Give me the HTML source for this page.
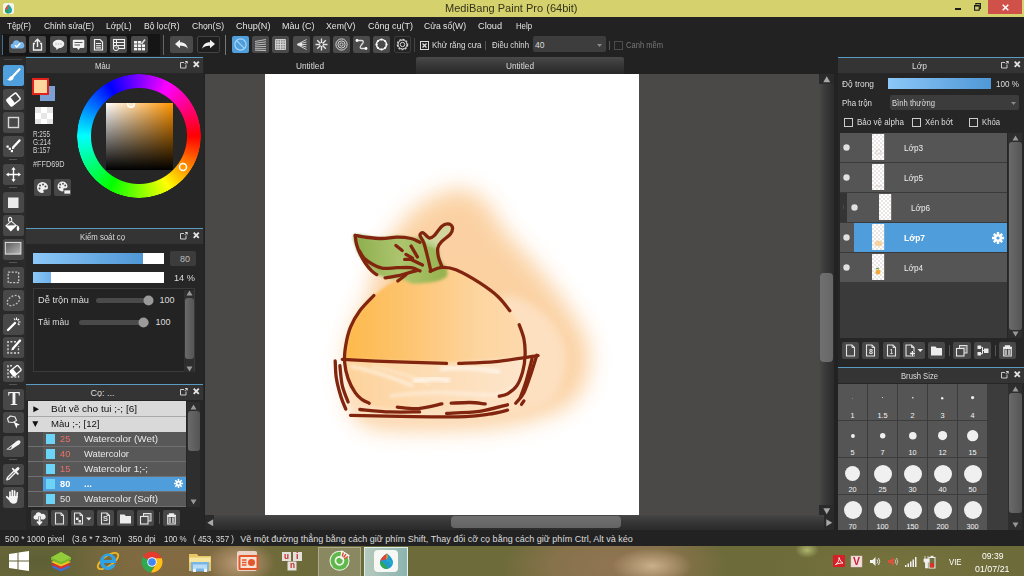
<!DOCTYPE html>
<html><head><meta charset="utf-8"><title>MediBang Paint Pro</title>
<style>
*{box-sizing:border-box;margin:0;padding:0}
html,body{width:1024px;height:576px;overflow:hidden;background:#222;font-family:"Liberation Sans","DejaVu Sans",sans-serif;font-size:10px;color:#ddd}
.t{position:absolute;white-space:nowrap;transform-origin:0 50%;line-height:1}
svg{overflow:visible}
</style></head>
<body>
<div style="position:absolute;left:0px;top:0px;width:1024px;height:17px;background:#d5d26d;"></div><span class="t" style="left:445.30px;top:3.35px;font-size:11.3px;color:#34331c;transform:scaleX(0.9768);">MediBang Paint Pro (64bit)</span><svg style="position:absolute;left:3px;top:3px;" width="11" height="11" viewBox="0 0 11 11"><rect x="0" y="0" width="11" height="11" rx="2.5" fill="#f4f4ee"/><path d="M5.5 1.5 C8 3.5 9 5.5 9 7 A3.5 3.5 0 0 1 2 7 C2 5.5 3 3.5 5.5 1.5Z" fill="#22a6a0"/><path d="M5.5 1.5 C4 3 2.6 4.6 2.2 6.2 L5 6.5 Z" fill="#e8493a"/><path d="M2 7 A3.5 3.5 0 0 0 5.5 10.5 L5.5 6.5Z" fill="#2a9c5c"/></svg><div style="position:absolute;left:955px;top:7.8px;width:6.2px;height:2px;background:#1c1c1c;"></div><svg style="position:absolute;left:974px;top:3px;" width="7" height="8" viewBox="0 0 7 8"><path d="M1.800 1.800V0.600H6.400V5.500H5.200" fill="none" stroke="#1c1c1c" stroke-width="1.100"/><rect x="0.600" y="2.600" width="4.600" height="4.600" fill="none" stroke="#1c1c1c" stroke-width="1.100"/><path d="M0.500 2.800H5.300" stroke="#1c1c1c" stroke-width="1.300"/></svg><div style="position:absolute;left:988px;top:0px;width:34px;height:13.5px;background:#d0504a;"></div><svg style="position:absolute;left:1001.5px;top:3.7px;" width="7" height="7" viewBox="0 0 7 7"><path d="M0.700 0.700L6.300 6.300M6.300 0.700L0.700 6.300" stroke="#fff" stroke-width="1.500"/></svg><div style="position:absolute;left:0px;top:17px;width:1024px;height:16px;background:#222;"></div><span class="t" style="left:7.00px;top:20.80px;font-size:9.6px;color:#e4e4e4;transform:scaleX(0.8339);">Tệp(F)</span><span class="t" style="left:43.50px;top:20.80px;font-size:9.6px;color:#e4e4e4;transform:scaleX(0.8760);">Chỉnh sửa(E)</span><span class="t" style="left:105.50px;top:20.80px;font-size:9.6px;color:#e4e4e4;transform:scaleX(0.8884);">Lớp(L)</span><span class="t" style="left:143.50px;top:20.80px;font-size:9.6px;color:#e4e4e4;transform:scaleX(0.8878);">Bộ lọc(R)</span><span class="t" style="left:191.50px;top:20.80px;font-size:9.6px;color:#e4e4e4;transform:scaleX(0.8955);">Chọn(S)</span><span class="t" style="left:235.50px;top:20.80px;font-size:9.6px;color:#e4e4e4;transform:scaleX(0.9513);">Chụp(N)</span><span class="t" style="left:281.50px;top:20.80px;font-size:9.6px;color:#e4e4e4;transform:scaleX(0.9378);">Màu (C)</span><span class="t" style="left:326.00px;top:20.80px;font-size:9.6px;color:#e4e4e4;transform:scaleX(0.9073);">Xem(V)</span><span class="t" style="left:367.50px;top:20.80px;font-size:9.6px;color:#e4e4e4;transform:scaleX(0.9378);">Công cụ(T)</span><span class="t" style="left:424.00px;top:20.80px;font-size:9.6px;color:#e4e4e4;transform:scaleX(0.8948);">Cửa sổ(W)</span><span class="t" style="left:477.50px;top:20.80px;font-size:9.6px;color:#e4e4e4;transform:scaleX(0.9570);">Cloud</span><span class="t" style="left:516.00px;top:20.80px;font-size:9.6px;color:#e4e4e4;transform:scaleX(0.8108);">Help</span><div style="position:absolute;left:0px;top:33px;width:1024px;height:24px;background:#222;"></div><div style="position:absolute;left:2px;top:34px;width:158px;height:22px;background:#151515;"></div><div style="position:absolute;left:2px;top:35px;width:1px;height:20px;background:#3d6f93;"></div><div style="position:absolute;left:163px;top:35px;width:1px;height:20px;background:#666;"></div><div style="position:absolute;left:225px;top:35px;width:1px;height:20px;background:#777;"></div><div style="position:absolute;left:9.0px;top:36px;width:17px;height:17px;background:#4a4a4a;border-radius:2px;"></div><div style="position:absolute;left:29.25px;top:36px;width:17px;height:17px;background:#4a4a4a;border-radius:2px;"></div><div style="position:absolute;left:49.5px;top:36px;width:17px;height:17px;background:#4a4a4a;border-radius:2px;"></div><div style="position:absolute;left:69.75px;top:36px;width:17px;height:17px;background:#4a4a4a;border-radius:2px;"></div><div style="position:absolute;left:90.0px;top:36px;width:17px;height:17px;background:#4a4a4a;border-radius:2px;"></div><div style="position:absolute;left:110.25px;top:36px;width:17px;height:17px;background:#4a4a4a;border-radius:2px;"></div><div style="position:absolute;left:130.5px;top:36px;width:17px;height:17px;background:#4a4a4a;border-radius:2px;"></div><div style="position:absolute;left:170px;top:36px;width:23px;height:17px;background:#4a4a4a;border-radius:2px;"></div><div style="position:absolute;left:196.5px;top:36px;width:23.5px;height:17px;background:#1e1e1e;border-radius:2px;border:1px solid #444;"></div><div style="position:absolute;left:232px;top:36px;width:17px;height:17px;background:#4f9fdc;border-radius:2px;"></div><div style="position:absolute;left:252.2px;top:36px;width:17px;height:17px;background:#4a4a4a;border-radius:2px;"></div><div style="position:absolute;left:272.4px;top:36px;width:17px;height:17px;background:#4a4a4a;border-radius:2px;"></div><div style="position:absolute;left:292.6px;top:36px;width:17px;height:17px;background:#4a4a4a;border-radius:2px;"></div><div style="position:absolute;left:312.8px;top:36px;width:17px;height:17px;background:#4a4a4a;border-radius:2px;"></div><div style="position:absolute;left:333.0px;top:36px;width:17px;height:17px;background:#4a4a4a;border-radius:2px;"></div><div style="position:absolute;left:353.2px;top:36px;width:17px;height:17px;background:#4a4a4a;border-radius:2px;"></div><div style="position:absolute;left:373.4px;top:36px;width:17px;height:17px;background:#4a4a4a;border-radius:2px;"></div><div style="position:absolute;left:393.6px;top:36px;width:17px;height:17px;background:#242424;border-radius:2px;border:1px solid #3c3c3c;"></div><div style="position:absolute;left:414px;top:38px;width:1px;height:14px;background:#444;"></div><svg style="position:absolute;left:420px;top:40.5px;" width="9" height="9" viewBox="0 0 9 9"><rect x="0.5" y="0.5" width="8" height="8" fill="none" stroke="#ddd" stroke-width="1"/><path d="M2.5 2.5L6.5 6.5M6.5 2.5L2.5 6.5" stroke="#ddd" stroke-width="1.4"/></svg><span class="t" style="left:431.80px;top:40.70px;font-size:9px;color:#ddd;transform:scaleX(0.8906);">Khử răng cưa</span><div style="position:absolute;left:485px;top:40.5px;width:1px;height:9px;background:#555;"></div><span class="t" style="left:492.00px;top:40.70px;font-size:9px;color:#ddd;transform:scaleX(0.8699);">Điều chỉnh</span><div style="position:absolute;left:532.5px;top:36px;width:73px;height:16px;background:#3d3d3d;border-radius:2px;"></div><span class="t" style="left:535.00px;top:40.95px;font-size:8.5px;color:#ddd;">40</span><svg style="position:absolute;left:596.5px;top:43.5px;" width="5" height="3.5" viewBox="0 0 5 3.5"><path d="M0 0H5L2.5 3Z" fill="#8a8a8a"/></svg><div style="position:absolute;left:608.5px;top:40.5px;width:1px;height:9px;background:#555;"></div><svg style="position:absolute;left:613.5px;top:40.5px;" width="9" height="9" viewBox="0 0 9 9"><rect x="0.5" y="0.5" width="8" height="8" fill="none" stroke="#4a4a4a" stroke-width="1"/></svg><span class="t" style="left:626.40px;top:40.70px;font-size:9px;color:#777;transform:scaleX(0.8406);">Canh mềm</span><div style="position:absolute;left:0px;top:57px;width:26px;height:473px;background:#2a2a2a;"></div><div style="position:absolute;left:4px;top:59px;width:18px;height:1px;background:#444;"></div><div style="position:absolute;left:3px;top:65px;width:21px;height:21px;background:#4fa0dc;border-radius:2.5px;"></div><div style="position:absolute;left:3px;top:88.5px;width:21px;height:21px;background:#484848;border-radius:2.5px;"></div><div style="position:absolute;left:3px;top:112px;width:21px;height:21px;background:#484848;border-radius:2.5px;"></div><div style="position:absolute;left:3px;top:135.5px;width:21px;height:21px;background:#484848;border-radius:2.5px;"></div><div style="position:absolute;left:3px;top:163.5px;width:21px;height:21px;background:#484848;border-radius:2.5px;"></div><div style="position:absolute;left:3px;top:191.5px;width:21px;height:21px;background:#484848;border-radius:2.5px;"></div><div style="position:absolute;left:3px;top:215px;width:21px;height:21px;background:#484848;border-radius:2.5px;"></div><div style="position:absolute;left:3px;top:238.5px;width:21px;height:21px;background:#484848;border-radius:2.5px;"></div><div style="position:absolute;left:3px;top:266.5px;width:21px;height:21px;background:#484848;border-radius:2.5px;"></div><div style="position:absolute;left:3px;top:290px;width:21px;height:21px;background:#484848;border-radius:2.5px;"></div><div style="position:absolute;left:3px;top:313.5px;width:21px;height:21px;background:#484848;border-radius:2.5px;"></div><div style="position:absolute;left:3px;top:337px;width:21px;height:21px;background:#484848;border-radius:2.5px;"></div><div style="position:absolute;left:3px;top:360.5px;width:21px;height:21px;background:#484848;border-radius:2.5px;"></div><div style="position:absolute;left:3px;top:388.5px;width:21px;height:21px;background:#484848;border-radius:2.5px;"></div><div style="position:absolute;left:3px;top:412px;width:21px;height:21px;background:#484848;border-radius:2.5px;"></div><div style="position:absolute;left:3px;top:435.5px;width:21px;height:21px;background:#484848;border-radius:2.5px;"></div><div style="position:absolute;left:3px;top:463.5px;width:21px;height:21px;background:#484848;border-radius:2.5px;"></div><div style="position:absolute;left:3px;top:487px;width:21px;height:21px;background:#484848;border-radius:2.5px;"></div><div style="position:absolute;left:9px;top:159px;width:8px;height:1px;background:#555;"></div><div style="position:absolute;left:9px;top:187px;width:8px;height:1px;background:#555;"></div><div style="position:absolute;left:9px;top:262px;width:8px;height:1px;background:#555;"></div><div style="position:absolute;left:9px;top:384px;width:8px;height:1px;background:#555;"></div><div style="position:absolute;left:9px;top:459px;width:8px;height:1px;background:#555;"></div><div style="position:absolute;left:26px;top:57px;width:179px;height:172px;background:#262626;"></div><div style="position:absolute;left:26px;top:57px;width:177px;height:16px;background:#343434;border-top:1px solid #5a9bc4;"></div><span class="t" style="left:95.00px;top:61.70px;font-size:9px;color:#ddd;transform:scaleX(0.8564);">Màu</span><svg style="position:absolute;left:179.7px;top:61.2px;" width="8" height="7.5" viewBox="0 0 8 7.5"><path d="M4 1.5H0.5V7H6V3.5" fill="none" stroke="#ccc" stroke-width="1"/><path d="M5.2 0.5H7.2V2.5M7.200 0.5L4.800 2.900" fill="none" stroke="#ddd" stroke-width="1"/></svg><svg style="position:absolute;left:192.5px;top:61.4px;" width="6.5" height="6.5" viewBox="0 0 6.5 6.5"><path d="M0.700 0.700L5.800 5.800M5.800 0.700L0.700 5.800" stroke="#e4e4e4" stroke-width="1.900"/></svg><div style="position:absolute;left:40px;top:86px;width:15px;height:15px;background:#7c9fd4;"></div><div style="position:absolute;left:32px;top:78px;width:16.5px;height:16.5px;background:#ffd69d;border:2px solid #e2221b;"></div><svg style="position:absolute;left:35px;top:107px;" width="18" height="17" viewBox="0 0 18 17"><rect width="18" height="17" fill="#fff"/><rect x="0" y="0" width="6" height="6" fill="#e6e6e6"/><rect x="12" y="0" width="6" height="6" fill="#e6e6e6"/><rect x="6" y="6" width="6" height="6" fill="#e6e6e6"/><rect x="0" y="12" width="6" height="5" fill="#e6e6e6"/><rect x="12" y="12" width="6" height="5" fill="#e6e6e6"/></svg><span class="t" style="left:32.90px;top:129.55px;font-size:8.5px;color:#d0d0d0;transform:scaleX(0.7493);">R:255</span><span class="t" style="left:32.90px;top:138.15px;font-size:8.5px;color:#d0d0d0;transform:scaleX(0.7730);">G:214</span><span class="t" style="left:32.90px;top:146.25px;font-size:8.5px;color:#d0d0d0;transform:scaleX(0.7651);">B:157</span><span class="t" style="left:32.90px;top:159.95px;font-size:8.5px;color:#d0d0d0;transform:scaleX(0.8577);">#FFD69D</span><div style="position:absolute;left:34.1px;top:179.2px;width:16.7px;height:16.7px;background:#484848;border-radius:2px;"></div><div style="position:absolute;left:54.4px;top:179.2px;width:16.5px;height:16.7px;background:#484848;border-radius:2px;"></div><div style="position:absolute;left:77px;top:74px;width:124px;height:124px;border-radius:50%;background:conic-gradient(from 90deg,#f00,#ff0,#0f0,#0ff,#00f,#f0f,#f00);-webkit-mask:radial-gradient(circle,transparent 47.5px,#000 48.5px,#000 61.5px,transparent 62.5px);mask:radial-gradient(circle,transparent 47.5px,#000 48.5px,#000 61.5px,transparent 62.5px)"></div><div style="position:absolute;left:105.5px;top:102.5px;width:67px;height:67px;background:linear-gradient(to bottom,rgba(0,0,0,0),#000),linear-gradient(to right,#fff,#ff9400)"></div><svg style="position:absolute;left:126px;top:102.5px;overflow:hidden" width="10" height="6" viewBox="0 4 10 6"><circle cx="5" cy="5" r="3.4" fill="#ffe6c4" stroke="#fff" stroke-width="1.4"/></svg><svg style="position:absolute;left:178px;top:161.6px;" width="10" height="10" viewBox="0 0 10 10"><circle cx="5" cy="5" r="3.5" fill="#ff9400" stroke="#fff" stroke-width="1.5"/></svg><div style="position:absolute;left:26px;top:228px;width:179px;height:156px;background:#262626;"></div><div style="position:absolute;left:26px;top:228px;width:177px;height:16px;background:#343434;border-top:1px solid #5a9bc4;"></div><span class="t" style="left:80.00px;top:232.70px;font-size:9px;color:#ddd;transform:scaleX(0.8649);">Kiểm soát cọ</span><svg style="position:absolute;left:179.7px;top:232.2px;" width="8" height="7.5" viewBox="0 0 8 7.5"><path d="M4 1.5H0.5V7H6V3.5" fill="none" stroke="#ccc" stroke-width="1"/><path d="M5.2 0.5H7.2V2.5M7.200 0.5L4.800 2.900" fill="none" stroke="#ddd" stroke-width="1"/></svg><svg style="position:absolute;left:192.5px;top:232.4px;" width="6.5" height="6.5" viewBox="0 0 6.5 6.5"><path d="M0.700 0.700L5.800 5.800M5.800 0.700L0.700 5.800" stroke="#e4e4e4" stroke-width="1.900"/></svg><div style="position:absolute;left:33px;top:253px;width:131px;height:11px;background:#fff;"></div><div style="position:absolute;left:33px;top:253px;width:109.5px;height:11px;background:linear-gradient(to right,#8cc8f8,#4f97d6);"></div><div style="position:absolute;left:169.5px;top:251px;width:26px;height:15px;background:#3c3c3c;border-radius:2px;"></div><span class="t" style="left:179.98px;top:254.50px;font-size:9px;color:#bbb;">80</span><div style="position:absolute;left:33px;top:272px;width:131px;height:11px;background:#fff;"></div><div style="position:absolute;left:33px;top:272px;width:17.5px;height:11px;background:linear-gradient(to right,#8cc8f8,#6fb2ea);"></div><span class="t" style="left:174.00px;top:273.50px;font-size:9px;color:#ddd;transform:scaleX(1.0236);">14 %</span><div style="position:absolute;left:33px;top:288.3px;width:162px;height:84px;background:#232323;border:1px solid #3a3a3a;"></div><span class="t" style="left:38.00px;top:295.50px;font-size:9px;color:#ddd;transform:scaleX(1.0297);">Dễ trộn màu</span><div style="position:absolute;left:95.5px;top:297.5px;width:57px;height:5px;background:#4a4a4a;border-radius:2.5px;"></div><svg style="position:absolute;left:142.5px;top:294.5px;" width="11" height="11" viewBox="0 0 11 11"><circle cx="5.5" cy="5.5" r="5" fill="#9a9a9a"/></svg><span class="t" style="left:159.50px;top:295.50px;font-size:9px;color:#ddd;">100</span><span class="t" style="left:38.00px;top:318.00px;font-size:9px;color:#ddd;transform:scaleX(0.9534);">Tải màu</span><div style="position:absolute;left:79px;top:320px;width:70px;height:5px;background:#4a4a4a;border-radius:2.5px;"></div><svg style="position:absolute;left:138px;top:317px;" width="11" height="11" viewBox="0 0 11 11"><circle cx="5.5" cy="5.5" r="5" fill="#9a9a9a"/></svg><span class="t" style="left:155.50px;top:318.00px;font-size:9px;color:#ddd;">100</span><div style="position:absolute;left:184px;top:289.5px;width:10px;height:82px;background:#2e2e2e;"></div><svg style="position:absolute;left:185.5px;top:290px;" width="7" height="6" viewBox="0 0 7 6"><path d="M3.5 0.5L6.5 5.5H0.5Z" fill="#999"/></svg><div style="position:absolute;left:184.5px;top:298px;width:9px;height:61px;background:linear-gradient(to right,#6a6a6a,#555);border-radius:3px;"></div><svg style="position:absolute;left:185.5px;top:365.5px;" width="7" height="6" viewBox="0 0 7 6"><path d="M3.5 5.5L6.5 0.5H0.5Z" fill="#999"/></svg><div style="position:absolute;left:26px;top:384px;width:179px;height:146px;background:#262626;"></div><div style="position:absolute;left:26px;top:384px;width:177px;height:16px;background:#343434;border-top:1px solid #5a9bc4;"></div><span class="t" style="left:90.50px;top:388.70px;font-size:9px;color:#ddd;">Cọ: ...</span><svg style="position:absolute;left:179.7px;top:388.2px;" width="8" height="7.5" viewBox="0 0 8 7.5"><path d="M4 1.5H0.5V7H6V3.5" fill="none" stroke="#ccc" stroke-width="1"/><path d="M5.2 0.5H7.2V2.5M7.200 0.5L4.800 2.900" fill="none" stroke="#ddd" stroke-width="1"/></svg><svg style="position:absolute;left:192.5px;top:388.4px;" width="6.5" height="6.5" viewBox="0 0 6.5 6.5"><path d="M0.700 0.700L5.800 5.800M5.800 0.700L0.700 5.800" stroke="#e4e4e4" stroke-width="1.900"/></svg><div style="position:absolute;left:28px;top:401px;width:158px;height:30.5px;background:#d9d9d9;"></div><div style="position:absolute;left:28px;top:416px;width:158px;height:1px;background:#a8a8a8;"></div><svg style="position:absolute;left:32.5px;top:405.5px;" width="6.5" height="7" viewBox="0 0 6.5 7"><path d="M0.3 0.3L6 3.3L0.3 6.3Z" fill="#111"/></svg><svg style="position:absolute;left:32.3px;top:421.3px;" width="7" height="6.5" viewBox="0 0 7 6.5"><path d="M0.3 0.3H6.3L3.3 6Z" fill="#111"/></svg><span class="t" style="left:50.70px;top:404.25px;font-size:9.5px;color:#111;transform:scaleX(1.0506);">Bút vẽ cho tui ;-; [6]</span><span class="t" style="left:50.70px;top:419.45px;font-size:9.5px;color:#111;transform:scaleX(1.0091);">Màu ;-; [12]</span><div style="position:absolute;left:28px;top:431.5px;width:158px;height:75px;background:#707070;"></div><div style="position:absolute;left:28px;top:432px;width:15px;height:14px;background:#4c4c4c;"></div><div style="position:absolute;left:43px;top:432px;width:143px;height:14px;background:#585858;"></div><div style="position:absolute;left:45.8px;top:434px;width:9.2px;height:9.5px;background:#6cd4f7;"></div><span class="t" style="left:59.50px;top:434.05px;font-size:9.5px;color:#ea7068;transform:scaleX(0.9737);">25</span><span class="t" style="left:83.50px;top:434.05px;font-size:9.5px;color:#e8e8e8;transform:scaleX(1.0384);">Watercolor (Wet)</span><div style="position:absolute;left:28px;top:447px;width:15px;height:14px;background:#4c4c4c;"></div><div style="position:absolute;left:43px;top:447px;width:143px;height:14px;background:#585858;"></div><div style="position:absolute;left:45.8px;top:449px;width:9.2px;height:9.5px;background:#6cd4f7;"></div><span class="t" style="left:59.50px;top:449.05px;font-size:9.5px;color:#ea7068;transform:scaleX(0.9737);">40</span><span class="t" style="left:83.50px;top:449.05px;font-size:9.5px;color:#e8e8e8;transform:scaleX(0.9873);">Watercolor</span><div style="position:absolute;left:28px;top:462px;width:15px;height:14px;background:#4c4c4c;"></div><div style="position:absolute;left:43px;top:462px;width:143px;height:14px;background:#585858;"></div><div style="position:absolute;left:45.8px;top:464px;width:9.2px;height:9.5px;background:#6cd4f7;"></div><span class="t" style="left:59.50px;top:464.05px;font-size:9.5px;color:#ea7068;transform:scaleX(0.9737);">15</span><span class="t" style="left:83.50px;top:464.05px;font-size:9.5px;color:#e8e8e8;transform:scaleX(1.0330);">Watercolor 1;-;</span><div style="position:absolute;left:28px;top:477px;width:15px;height:14px;background:#4c4c4c;"></div><div style="position:absolute;left:43px;top:477px;width:143px;height:14px;background:#4f9ddb;"></div><div style="position:absolute;left:45.8px;top:479px;width:9.2px;height:9.5px;background:#6cd4f7;"></div><span class="t" style="left:59.50px;top:479.05px;font-size:9.5px;color:#fff;font-weight:bold;transform:scaleX(0.9737);">80</span><span class="t" style="left:83.50px;top:479.05px;font-size:9.5px;color:#fff;font-weight:bold;transform:scaleX(1.0099);">...</span><div style="position:absolute;left:28px;top:492px;width:15px;height:14px;background:#4c4c4c;"></div><div style="position:absolute;left:43px;top:492px;width:143px;height:14px;background:#585858;"></div><div style="position:absolute;left:45.8px;top:494px;width:9.2px;height:9.5px;background:#6cd4f7;"></div><span class="t" style="left:59.50px;top:494.05px;font-size:9.5px;color:#e4e4e4;transform:scaleX(0.9737);">50</span><span class="t" style="left:83.50px;top:494.05px;font-size:9.5px;color:#e8e8e8;transform:scaleX(1.0356);">Watercolor (Soft)</span><div style="position:absolute;left:28px;top:506.5px;width:158px;height:1.5px;background:#262626;"></div><svg style="position:absolute;left:173.5px;top:479px;" width="9" height="9" viewBox="0 0 9 9"><circle cx="4.5" cy="4.5" r="2.6" fill="#fff"/><g stroke="#fff" stroke-width="1.6"><path d="M4.5 0V9M0 4.5H9M1.3 1.3L7.7 7.7M7.7 1.3L1.3 7.7"/></g><circle cx="4.5" cy="4.5" r="1" fill="#4f9ddb"/></svg><div style="position:absolute;left:187px;top:402px;width:13px;height:105px;background:#2e2e2e;"></div><svg style="position:absolute;left:190px;top:404px;" width="7" height="6" viewBox="0 0 7 6"><path d="M3.5 0.5L6.5 5.5H0.5Z" fill="#999"/></svg><div style="position:absolute;left:187.5px;top:411px;width:12px;height:40px;background:linear-gradient(to right,#6a6a6a,#555);border-radius:3px;"></div><svg style="position:absolute;left:190px;top:499px;" width="7" height="6" viewBox="0 0 7 6"><path d="M3.5 5.5L6.5 0.5H0.5Z" fill="#999"/></svg><div style="position:absolute;left:31.3px;top:509.5px;width:16.7px;height:16.7px;background:#484848;border-radius:2px;"></div><div style="position:absolute;left:51.1px;top:509.5px;width:16.7px;height:16.7px;background:#484848;border-radius:2px;"></div><div style="position:absolute;left:71.4px;top:509.5px;width:22.3px;height:16.7px;background:#484848;border-radius:2px;"></div><div style="position:absolute;left:97.2px;top:509.5px;width:16.7px;height:16.7px;background:#484848;border-radius:2px;"></div><div style="position:absolute;left:117px;top:509.5px;width:16.7px;height:16.7px;background:#484848;border-radius:2px;"></div><div style="position:absolute;left:137.1px;top:509.5px;width:16.9px;height:16.7px;background:#484848;border-radius:2px;"></div><div style="position:absolute;left:163.1px;top:509.5px;width:16.7px;height:16.7px;background:#484848;border-radius:2px;"></div><div style="position:absolute;left:159px;top:512px;width:1px;height:12px;background:#555;"></div><div style="position:absolute;left:204px;top:57px;width:634px;height:473px;background:#222;"></div><div style="position:absolute;left:205px;top:57px;width:211px;height:17px;background:#222;"></div><div style="position:absolute;left:415.5px;top:56.5px;width:208.5px;height:17.5px;background:linear-gradient(to bottom,#4a4a4a,#3a3a3a 40%,#282828);border-radius:2px 2px 0 0;"></div><span class="t" style="left:296.00px;top:62.05px;font-size:8.5px;color:#ddd;transform:scaleX(0.9713);">Untitled</span><span class="t" style="left:505.50px;top:62.05px;font-size:8.5px;color:#ddd;transform:scaleX(0.9713);">Untitled</span><div style="position:absolute;left:205.4px;top:74px;width:614.6px;height:441px;background:#4a4948;"></div><div style="position:absolute;left:264.8px;top:74px;width:374.7px;height:441px;background:#fff;"></div><div style="position:absolute;left:819px;top:74px;width:14.5px;height:441px;background:linear-gradient(to right,#4a4948,#3a3a3a 40%,#2b2b2b);"></div><div style="position:absolute;left:819px;top:74px;width:14.5px;height:10px;background:#2a2a2a;"></div><div style="position:absolute;left:819px;top:505px;width:14.5px;height:10px;background:#2a2a2a;"></div><div style="position:absolute;left:819.5px;top:273px;width:13.5px;height:89px;background:linear-gradient(to right,#707070,#666);border-radius:4px;"></div><svg style="position:absolute;left:822.5px;top:75.5px;" width="7.5" height="6.5" viewBox="0 0 7.5 6.5"><path d="M3.75 0.3L7.2 6.200H0.3Z" fill="#a8a8a8"/></svg><svg style="position:absolute;left:822.5px;top:507.5px;" width="7.5" height="6.5" viewBox="0 0 7.5 6.5"><path d="M3.75 6.200L7.2 0.3H0.3Z" fill="#a8a8a8"/></svg><div style="position:absolute;left:205.4px;top:515px;width:628px;height:15px;background:linear-gradient(to bottom,#474646,#3a3a3a 35%,#2a2a2a);"></div><div style="position:absolute;left:205.4px;top:515px;width:9px;height:15px;background:#2a2a2a;"></div><div style="position:absolute;left:824px;top:515px;width:9.5px;height:15px;background:#2a2a2a;"></div><div style="position:absolute;left:451px;top:515.5px;width:169.5px;height:12.5px;background:linear-gradient(to bottom,#707070,#646464);border-radius:4px;"></div><svg style="position:absolute;left:206.5px;top:518.8px;" width="6.5" height="7.5" viewBox="0 0 6.5 7.5"><path d="M0.3 3.750L6.200 0.3V7.200Z" fill="#a8a8a8"/></svg><svg style="position:absolute;left:825.5px;top:518.8px;" width="6.5" height="7.5" viewBox="0 0 6.5 7.5"><path d="M6.200 3.750L0.3 0.3V7.200Z" fill="#a8a8a8"/></svg><svg style="position:absolute;left:0;top:0" width="1024" height="576" viewBox="0 0 1024 576"><defs>
<filter id="b10" x="-30%" y="-30%" width="160%" height="160%"><feGaussianBlur stdDeviation="11"/></filter>
<filter id="b4" x="-30%" y="-30%" width="160%" height="160%"><feGaussianBlur stdDeviation="4"/></filter>
<filter id="b2" x="-30%" y="-30%" width="160%" height="160%"><feGaussianBlur stdDeviation="1.6"/></filter>
<linearGradient id="fg" x1="0" y1="0" x2="1" y2="0"><stop offset="0" stop-color="#fdb94a"/><stop offset=".35" stop-color="#fdc470"/><stop offset=".75" stop-color="#fdd5a0"/><stop offset="1" stop-color="#fdd9ac"/></linearGradient>
<linearGradient id="lg" x1="0" y1="0" x2="1" y2="0"><stop offset="0" stop-color="#86a842"/><stop offset=".5" stop-color="#a9c56c"/><stop offset="1" stop-color="#8fb04b"/></linearGradient>
<linearGradient id="bg2" x1="0" y1="0" x2="1" y2="0"><stop offset="0" stop-color="#fdd29a"/><stop offset=".45" stop-color="#fddcb4"/><stop offset="1" stop-color="#fde5cb"/></linearGradient>
<clipPath id="cv"><rect x="264" y="74" width="375.5" height="441"/></clipPath>
</defs>
<g clip-path="url(#cv)">
<path d="M380.0 256.0C385.0 244.3 391.3 236.5 398.0 228.0C404.7 219.5 412.2 211.0 420.0 205.0C427.8 199.0 437.3 194.5 445.0 192.0C452.7 189.5 459.0 188.2 466.0 190.0C473.0 191.8 480.3 196.0 487.0 203.0C493.7 210.0 497.5 221.2 506.0 232.0C514.5 242.8 527.2 254.7 538.0 268.0C548.8 281.3 562.7 299.2 571.0 312.0C579.3 324.8 585.5 333.7 588.0 345.0C590.5 356.3 589.0 370.2 586.0 380.0C583.0 389.8 578.0 397.7 570.0 404.0C562.0 410.3 552.0 414.0 538.0 418.0C524.0 422.0 508.5 426.0 486.0 428.0C463.5 430.0 423.2 430.5 403.0 430.0C382.8 429.5 373.5 428.7 365.0 425.0C356.5 421.3 355.0 415.5 352.0 408.0C349.0 400.5 347.7 389.7 347.0 380.0C346.3 370.3 346.5 359.7 348.0 350.0C349.5 340.3 352.7 330.7 356.0 322.0C359.3 313.3 364.0 309.0 368.0 298.0C372.0 287.0 375.0 267.7 380.0 256.0Z" fill="#fbd0a0" filter="url(#b10)" opacity=".97"/>
<path d="M500.0 300.0C506.7 288.3 529.2 302.5 540.0 310.0C550.8 317.5 561.3 332.5 565.0 345.0C568.7 357.5 566.2 374.5 562.0 385.0C557.8 395.5 553.7 402.2 540.0 408.0C526.3 413.8 503.3 417.7 480.0 420.0C456.7 422.3 420.0 422.8 400.0 422.0C380.0 421.2 368.3 419.5 360.0 415.0C351.7 410.5 340.0 399.2 350.0 395.0C360.0 390.8 395.0 392.5 420.0 390.0C445.0 387.5 486.7 395.0 500.0 380.0C513.3 365.0 493.3 311.7 500.0 300.0Z" fill="#fde0c0" filter="url(#b4)"/>
<path d="M344.6 360.0C344.8 357.5 344.8 350.5 345.8 345.0C346.8 339.5 348.2 332.9 350.5 327.2C352.8 321.5 355.9 316.1 359.8 310.8C363.7 305.5 367.2 301.0 373.9 295.5C380.6 290.0 390.6 282.0 400.0 278.0C409.4 274.0 423.2 273.2 430.2 271.4C437.2 269.6 437.6 267.7 441.9 267.4C446.2 267.1 449.6 267.2 455.9 269.8C462.1 272.4 472.4 278.2 479.4 282.7C486.4 287.2 493.0 292.0 498.1 296.7C503.2 301.4 506.3 306.1 509.8 310.8C513.3 315.5 516.9 319.9 519.2 324.8C521.6 329.7 522.9 334.5 523.9 340.0C524.9 345.5 524.9 355.0 525.1 358.0L446 363Z" fill="url(#fg)" filter="url(#b2)"/>
<path d="M525.1 357.0C524.7 359.4 524.1 366.8 522.7 371.6C521.3 376.4 519.4 381.4 516.9 385.6C514.4 389.8 513.6 393.3 507.5 397.0C501.4 400.7 494.6 405.8 480.0 408.0C465.4 410.2 438.5 410.5 420.0 410.0C401.5 409.5 380.0 407.9 369.2 405.0C358.4 402.1 358.7 397.1 355.2 392.7C351.7 388.3 349.9 384.1 348.1 378.6C346.3 373.2 345.2 363.1 344.6 360.0L446 363Z" fill="url(#bg2)" filter="url(#b2)"/>
<path d="M350 366Q380 372 413 386" fill="none" stroke="#fff" stroke-width="4" opacity=".45" filter="url(#b2)"/>
<path d="M372 366Q400 372 430 384" fill="none" stroke="#fff" stroke-width="3" opacity=".3" filter="url(#b2)"/>
<path d="M413 382Q432 376 450 381" fill="none" stroke="#fff" stroke-width="6" opacity=".55" filter="url(#b2)"/>
<path d="M440 369Q470 366 500 372" fill="none" stroke="#fff" stroke-width="5" opacity=".5" filter="url(#b2)"/>
<path d="M390 396Q430 390 470 394T512 386" fill="none" stroke="#fff" stroke-width="4" opacity=".35" filter="url(#b2)"/>
<path d="M355.2 234.6C359.1 233.4 371.6 237.8 378.6 238.0C385.6 238.2 391.5 236.0 397.3 236.0C403.1 236.0 409.8 238.0 413.7 238.0C417.6 238.0 418.8 235.7 421.0 236.0C423.2 236.3 424.8 238.8 427.0 240.0C429.2 241.2 432.2 241.5 434.0 243.0C435.8 244.5 437.0 246.3 438.0 249.0C439.0 251.7 438.7 255.8 440.0 259.0C441.3 262.2 444.8 265.2 446.0 268.0C447.2 270.8 448.3 273.8 447.0 276.0C445.7 278.2 441.8 279.8 438.0 281.0C434.2 282.2 428.3 282.6 424.0 283.0C419.7 283.4 415.3 284.0 412.0 283.5C408.7 283.0 407.3 280.8 404.0 280.0C400.7 279.2 396.3 279.8 392.0 279.0C387.7 278.2 381.8 277.0 378.0 275.0C374.2 273.0 372.0 270.2 369.0 267.0C366.0 263.8 362.2 259.7 360.0 256.0C357.8 252.3 356.3 248.6 355.5 245.0C354.7 241.4 351.3 235.8 355.2 234.6Z" fill="url(#lg)" filter="url(#b2)" opacity=".95"/>
<path d="M421.0 235.0C420.8 233.2 422.3 231.7 424.0 232.0C425.7 232.3 428.0 238.0 431.0 237.0C434.0 236.0 439.1 228.2 442.0 226.0C444.9 223.8 446.8 223.8 448.5 224.0C450.2 224.2 451.9 225.8 452.0 227.5C452.1 229.2 450.8 231.8 449.0 234.0C447.2 236.2 442.8 238.5 441.0 241.0C439.2 243.5 439.5 248.0 438.0 249.0C436.5 250.0 434.2 248.0 432.0 247.0C429.8 246.0 426.8 245.0 425.0 243.0C423.2 241.0 421.2 236.8 421.0 235.0Z" fill="#c3d89c" filter="url(#b2)" opacity=".75"/>
<path d="M355.2 235.3C356.9 235.6 360.9 236.7 365.4 237.2C369.8 237.7 376.6 238.5 381.9 238.5C387.2 238.5 392.2 237.2 397.1 237.2C402.0 237.2 407.3 237.7 411.1 238.5C414.9 239.3 418.5 241.7 420.0 242.3" fill="none" stroke="#82250f" stroke-width="3.3" stroke-linecap="round" stroke-linejoin="round"/>
<path d="M355.2 235.3C355.4 236.8 355.6 241.0 356.5 244.2C357.4 247.4 358.8 251.2 360.3 254.4C361.8 257.6 363.5 260.4 365.4 263.2C367.3 265.9 369.8 269.0 371.7 270.9C373.6 272.8 375.9 274.1 376.8 274.7" fill="none" stroke="#82250f" stroke-width="3.3" stroke-linecap="round" stroke-linejoin="round"/>
<path d="M359.5 251.0C360.3 252.2 361.9 255.9 364.1 258.2C366.4 260.4 369.8 262.8 373.0 264.5C376.2 266.2 379.2 267.8 383.2 268.3C387.2 268.8 392.5 267.8 397.1 267.7C401.8 267.6 407.3 267.2 411.1 267.7C414.9 268.2 418.5 270.4 420.0 270.9" fill="none" stroke="#82250f" stroke-width="3.3" stroke-linecap="round" stroke-linejoin="round"/>
<path d="M385.1 277.8C387.1 277.5 393.2 276.7 397.1 275.9C401.0 275.1 405.4 273.6 408.6 272.8C411.8 272.0 414.9 271.2 416.2 270.9" fill="none" stroke="#82250f" stroke-width="3.3" stroke-linecap="round" stroke-linejoin="round"/>
<path d="M397.8 281.0L406.0 274.7" fill="none" stroke="#82250f" stroke-width="3.3" stroke-linecap="round" stroke-linejoin="round"/>
<path d="M430.8 270.9C430.3 268.6 428.8 261.6 427.6 256.9C426.4 252.2 425.1 246.5 423.8 242.9C422.5 239.3 420.1 237.0 420.0 235.3C419.9 233.6 421.7 232.4 423.2 232.8C424.7 233.2 427.1 237.4 428.9 237.9C430.7 238.4 431.8 237.8 433.9 235.9C436.0 234.0 439.3 228.4 441.6 226.4C443.9 224.4 446.1 223.8 447.9 223.9C449.7 224.0 452.0 225.4 452.4 227.1C452.8 228.8 452.2 231.6 450.4 234.0C448.6 236.4 443.7 239.4 441.6 241.7C439.5 244.0 438.3 245.5 437.8 248.0C437.3 250.5 437.8 253.9 438.4 256.9C439.0 259.9 441.1 264.3 441.6 265.8" fill="none" stroke="#82250f" stroke-width="3.3" stroke-linecap="round" stroke-linejoin="round"/>
<path d="M430.2 271.4C432.1 270.7 437.6 267.7 441.9 267.4C446.2 267.1 449.6 267.2 455.9 269.8C462.1 272.4 472.4 278.2 479.4 282.7C486.4 287.2 493.0 292.0 498.1 296.7C503.2 301.4 507.9 308.4 509.8 310.8" fill="none" stroke="#82250f" stroke-width="3.3" stroke-linecap="round" stroke-linejoin="round"/>
<path d="M519.2 324.8C520.0 327.1 522.9 333.7 523.9 338.8C524.9 343.9 525.3 349.7 525.1 355.2C524.9 360.7 524.1 366.5 522.7 371.6C521.3 376.7 519.4 381.9 516.9 385.6C514.4 389.3 510.4 392.0 507.5 393.8C504.6 395.6 500.7 395.8 499.3 396.2" fill="none" stroke="#82250f" stroke-width="3.3" stroke-linecap="round" stroke-linejoin="round"/>
<path d="M373.9 295.5C371.5 298.1 363.7 305.5 359.8 310.8C355.9 316.1 352.8 321.5 350.5 327.2C348.2 332.9 346.8 339.2 345.8 345.0C344.8 350.8 344.2 356.6 344.6 362.2C345.0 367.8 346.3 373.5 348.1 378.6C349.9 383.7 352.9 389.2 355.2 392.7C357.5 396.2 359.9 397.9 362.2 399.7C364.5 401.4 368.0 402.6 369.2 403.2" fill="none" stroke="#82250f" stroke-width="3.3" stroke-linecap="round" stroke-linejoin="round"/>
<path d="M342.3 359.4C350.3 359.8 372.9 361.0 390.3 361.7C407.7 362.4 437.2 363.1 446.6 363.4" fill="none" stroke="#82250f" stroke-width="3.3" stroke-linecap="round" stroke-linejoin="round"/>
<path d="M458.7 363.4C464.9 363.1 482.6 363.0 495.8 361.7C509.0 360.4 531.0 356.6 538.0 355.6" fill="none" stroke="#82250f" stroke-width="3.3" stroke-linecap="round" stroke-linejoin="round"/>
<path d="M335.2 361.0C335.4 363.9 335.4 372.6 336.4 378.6C337.4 384.7 339.5 392.2 341.1 397.3C342.7 402.4 345.0 407.1 345.8 409.1" fill="none" stroke="#82250f" stroke-width="3.3" stroke-linecap="round" stroke-linejoin="round"/>
<path d="M339.9 365.7C340.3 369.0 340.9 379.6 342.3 385.6C343.7 391.7 347.1 399.3 348.1 402.0" fill="none" stroke="#82250f" stroke-width="3.3" stroke-linecap="round" stroke-linejoin="round"/>
<path d="M536.8 355.2C535.8 358.3 533.0 367.6 530.9 373.9C528.8 380.1 526.4 387.8 523.9 392.7C521.4 397.6 517.1 401.4 515.7 403.2" fill="none" stroke="#82250f" stroke-width="3.3" stroke-linecap="round" stroke-linejoin="round"/>
<path d="M532.1 358.7C531.1 362.4 528.2 374.5 526.2 380.9C524.2 387.3 521.4 394.6 520.4 397.3" fill="none" stroke="#82250f" stroke-width="3.3" stroke-linecap="round" stroke-linejoin="round"/>
<path d="M523.9 400.9L521.5 404.4" fill="none" stroke="#82250f" stroke-width="3.3" stroke-linecap="round" stroke-linejoin="round"/>
<path d="M359.8 409.5C364.9 409.9 380.3 411.5 390.3 411.9C400.3 412.3 414.7 411.9 419.6 411.9" fill="none" stroke="#82250f" stroke-width="3.3" stroke-linecap="round" stroke-linejoin="round"/>
<path d="M350.5 415.4C361.0 415.6 394.6 416.4 413.7 416.6C432.8 416.8 452.8 417.0 465.3 416.6C477.8 416.2 481.7 415.3 488.7 414.2C495.7 413.1 504.4 410.9 507.5 410.2" fill="none" stroke="#82250f" stroke-width="3.3" stroke-linecap="round" stroke-linejoin="round"/>
<path d="M397.3 407.2C400.8 407.4 411.0 409.2 418.4 408.6C425.8 408.1 438.0 404.7 441.9 403.9" fill="none" stroke="#82250f" stroke-width="3.3" stroke-linecap="round" stroke-linejoin="round"/>
<path d="M451.2 403.2C454.3 403.1 464.3 402.4 470.0 402.5C475.7 402.6 482.7 403.7 485.2 403.9" fill="none" stroke="#82250f" stroke-width="3.3" stroke-linecap="round" stroke-linejoin="round"/>
<path d="M446.6 413.3C452.1 413.0 469.2 412.8 479.4 411.4C489.5 410.0 502.8 405.9 507.5 404.8" fill="none" stroke="#82250f" stroke-width="3.3" stroke-linecap="round" stroke-linejoin="round"/>
<path d="M395.9 245.5L402.2 250.5" fill="none" stroke="#82250f" stroke-width="3.3" stroke-linecap="round" stroke-linejoin="round"/>
<path d="M411.1 246.1L417.4 256.9" fill="none" stroke="#82250f" stroke-width="3.3" stroke-linecap="round" stroke-linejoin="round"/>
<path d="M406.0 254.4L412.4 258.2" fill="none" stroke="#82250f" stroke-width="3.3" stroke-linecap="round" stroke-linejoin="round"/>
<path d="M404.7 259.4L411.1 259.4" fill="none" stroke="#82250f" stroke-width="3.3" stroke-linecap="round" stroke-linejoin="round"/>
<path d="M411.1 259.4L422.5 265.1" fill="none" stroke="#82250f" stroke-width="3.3" stroke-linecap="round" stroke-linejoin="round"/>
</g></svg><div style="position:absolute;left:834px;top:57px;width:4px;height:473px;background:#222;"></div><div style="position:absolute;left:838px;top:57px;width:186px;height:310px;background:#262626;"></div><div style="position:absolute;left:838px;top:57px;width:186px;height:16px;background:#343434;border-top:1px solid #5a9bc4;"></div><span class="t" style="left:911.50px;top:61.70px;font-size:9px;color:#ddd;transform:scaleX(0.9421);">Lớp</span><svg style="position:absolute;left:1000.7px;top:61.2px;" width="8" height="7.5" viewBox="0 0 8 7.5"><path d="M4 1.5H0.5V7H6V3.5" fill="none" stroke="#ccc" stroke-width="1"/><path d="M5.2 0.5H7.2V2.5M7.200 0.5L4.800 2.900" fill="none" stroke="#ddd" stroke-width="1"/></svg><svg style="position:absolute;left:1013.5px;top:61.4px;" width="6.5" height="6.5" viewBox="0 0 6.5 6.5"><path d="M0.700 0.700L5.800 5.800M5.800 0.700L0.700 5.800" stroke="#e4e4e4" stroke-width="1.900"/></svg><span class="t" style="left:842.00px;top:79.50px;font-size:9px;color:#ddd;transform:scaleX(0.9267);">Độ trong</span><div style="position:absolute;left:888px;top:77.5px;width:103px;height:11px;background:linear-gradient(to right,#8cc8f8,#4f97d6);"></div><span class="t" style="left:996.00px;top:79.50px;font-size:9px;color:#ddd;transform:scaleX(0.9009);">100 %</span><span class="t" style="left:842.00px;top:98.50px;font-size:9px;color:#ddd;transform:scaleX(0.8815);">Pha trộn</span><div style="position:absolute;left:890px;top:95px;width:129px;height:15px;background:#3c3c3c;border-radius:2px;"></div><span class="t" style="left:892.00px;top:98.50px;font-size:9px;color:#ddd;transform:scaleX(0.8520);">Bình thường</span><svg style="position:absolute;left:1010.5px;top:101.5px;" width="5" height="3.5" viewBox="0 0 5 3.5"><path d="M0 0H5L2.5 3Z" fill="#8a8a8a"/></svg><svg style="position:absolute;left:844px;top:117.5px;" width="9" height="9" viewBox="0 0 9 9"><rect x="0.5" y="0.5" width="8" height="8" fill="none" stroke="#ccc" stroke-width="1"/></svg><span class="t" style="left:856.50px;top:117.50px;font-size:9px;color:#ddd;transform:scaleX(0.8944);">Bảo vệ alpha</span><svg style="position:absolute;left:912px;top:117.5px;" width="9" height="9" viewBox="0 0 9 9"><rect x="0.5" y="0.5" width="8" height="8" fill="none" stroke="#ccc" stroke-width="1"/></svg><span class="t" style="left:924.50px;top:117.50px;font-size:9px;color:#ddd;transform:scaleX(0.8771);">Xén bớt</span><svg style="position:absolute;left:968.5px;top:117.5px;" width="9" height="9" viewBox="0 0 9 9"><rect x="0.5" y="0.5" width="8" height="8" fill="none" stroke="#ccc" stroke-width="1"/></svg><span class="t" style="left:981.50px;top:117.50px;font-size:9px;color:#ddd;transform:scaleX(0.8559);">Khóa</span><div style="position:absolute;left:840px;top:133px;width:167px;height:205px;background:#3a3a3a;"></div><svg width="0" height="0" style="position:absolute"><defs><pattern id="ck" width="4" height="4" patternUnits="userSpaceOnUse"><rect width="4" height="4" fill="#fff"/><rect width="2" height="2" fill="#ebe6e6"/><rect x="2" y="2" width="2" height="2" fill="#ebe6e6"/></pattern></defs></svg><div style="position:absolute;left:840px;top:133px;width:167px;height:29px;background:#555;"></div><svg style="position:absolute;left:842.8px;top:144px;" width="7" height="7" viewBox="0 0 7 7"><circle cx="3.5" cy="3.5" r="3.2" fill="#e0e0e0"/></svg><svg style="position:absolute;left:872px;top:134.3px;" width="12.2" height="26" viewBox="0 0 12.2 26"><rect width="12.2" height="26" fill="url(#ck)"/></svg><span class="t" style="left:904.00px;top:142.75px;font-size:9.5px;color:#eee;transform:scaleX(0.8600);">Lớp3</span><div style="position:absolute;left:840px;top:163px;width:167px;height:29px;background:#555;"></div><svg style="position:absolute;left:842.8px;top:174px;" width="7" height="7" viewBox="0 0 7 7"><circle cx="3.5" cy="3.5" r="3.2" fill="#e0e0e0"/></svg><svg style="position:absolute;left:872px;top:164.3px;" width="12.2" height="26" viewBox="0 0 12.2 26"><rect width="12.2" height="26" fill="url(#ck)"/></svg><span class="t" style="left:904.00px;top:172.75px;font-size:9.5px;color:#eee;transform:scaleX(0.8600);">Lớp5</span><div style="position:absolute;left:840px;top:193px;width:6.5px;height:29px;background:#343434;"></div><div style="position:absolute;left:842.5px;top:205px;width:1.5px;height:4px;background:#4a4a4a;"></div><div style="position:absolute;left:846.5px;top:193px;width:160.5px;height:29px;background:#555;"></div><svg style="position:absolute;left:851.0px;top:204px;" width="7" height="7" viewBox="0 0 7 7"><circle cx="3.5" cy="3.5" r="3.2" fill="#e0e0e0"/></svg><svg style="position:absolute;left:879.3px;top:194.3px;" width="12.2" height="26" viewBox="0 0 12.2 26"><rect width="12.2" height="26" fill="url(#ck)"/></svg><span class="t" style="left:911.00px;top:202.75px;font-size:9.5px;color:#eee;transform:scaleX(0.8600);">Lớp6</span><div style="position:absolute;left:840px;top:223px;width:167px;height:29px;background:#555;"></div><div style="position:absolute;left:854px;top:223px;width:153px;height:29px;background:#4f9ddb;"></div><svg style="position:absolute;left:842.8px;top:234px;" width="7" height="7" viewBox="0 0 7 7"><circle cx="3.5" cy="3.5" r="3.2" fill="#e0e0e0"/></svg><svg style="position:absolute;left:872px;top:224.3px;" width="12.2" height="26" viewBox="0 0 12.2 26"><rect width="12.2" height="26" fill="url(#ck)"/></svg><span class="t" style="left:904.00px;top:232.75px;font-size:9.5px;color:#fff;font-weight:bold;transform:scaleX(0.8877);">Lớp7</span><div style="position:absolute;left:840px;top:253px;width:167px;height:29px;background:#555;"></div><svg style="position:absolute;left:842.8px;top:264px;" width="7" height="7" viewBox="0 0 7 7"><circle cx="3.5" cy="3.5" r="3.2" fill="#e0e0e0"/></svg><svg style="position:absolute;left:872px;top:254.3px;" width="12.2" height="26" viewBox="0 0 12.2 26"><rect width="12.2" height="26" fill="url(#ck)"/></svg><span class="t" style="left:904.00px;top:262.75px;font-size:9.5px;color:#eee;transform:scaleX(0.8600);">Lớp4</span><svg style="position:absolute;left:872px;top:227px;" width="13" height="25" viewBox="0 0 13 25"><path d="M3 15Q6 12 10 15Q11 18 9 19H4Q2 18 3 15Z" fill="#f8c88a" opacity=".8"/></svg><svg style="position:absolute;left:872px;top:257px;" width="13" height="25" viewBox="0 0 13 25"><circle cx="6" cy="15" r="2.5" fill="#f2a93a"/><path d="M4 12L7 11" stroke="#5a8a2a" stroke-width="1"/></svg><svg style="position:absolute;left:872px;top:137px;" width="13" height="25" viewBox="0 0 13 25"><path d="M4 14Q6 11 9 14V17H4Z" fill="none" stroke="#c9b5aa" stroke-width=".6"/></svg><svg style="position:absolute;left:872px;top:167px;" width="13" height="25" viewBox="0 0 13 25"><path d="M3 19H10" stroke="#c9b5aa" stroke-width=".6"/></svg><svg style="position:absolute;left:991.5px;top:232px;" width="12" height="12" viewBox="0 0 12 12"><g stroke="#fff" stroke-width="2.4"><path d="M6 0V12M0 6H12M1.8 1.8L10.2 10.2M10.2 1.8L1.8 10.2"/></g><circle cx="6" cy="6" r="3.8" fill="#fff"/><circle cx="6" cy="6" r="1.6" fill="#4f9ddb"/></svg><div style="position:absolute;left:1008px;top:133px;width:14px;height:205px;background:#2e2e2e;"></div><svg style="position:absolute;left:1011.5px;top:135px;" width="7" height="6" viewBox="0 0 7 6"><path d="M3.5 0.5L6.5 5.5H0.5Z" fill="#999"/></svg><div style="position:absolute;left:1008.5px;top:142px;width:13px;height:188px;background:linear-gradient(to right,#6a6a6a,#555);border-radius:3px;"></div><svg style="position:absolute;left:1011.5px;top:331px;" width="7" height="6" viewBox="0 0 7 6"><path d="M3.5 5.5L6.5 0.5H0.5Z" fill="#999"/></svg><div style="position:absolute;left:842px;top:342px;width:17px;height:17px;background:#484848;border-radius:2px;"></div><div style="position:absolute;left:862.2px;top:342px;width:17.2px;height:17px;background:#484848;border-radius:2px;"></div><div style="position:absolute;left:882.5px;top:342px;width:17.3px;height:17px;background:#484848;border-radius:2px;"></div><div style="position:absolute;left:903px;top:342px;width:22.3px;height:17px;background:#484848;border-radius:2px;"></div><div style="position:absolute;left:928.3px;top:342px;width:17px;height:17px;background:#484848;border-radius:2px;"></div><div style="position:absolute;left:953.3px;top:342px;width:17.3px;height:17px;background:#484848;border-radius:2px;"></div><div style="position:absolute;left:974px;top:342px;width:17px;height:17px;background:#484848;border-radius:2px;"></div><div style="position:absolute;left:999.1px;top:342px;width:17.3px;height:17px;background:#484848;border-radius:2px;"></div><div style="position:absolute;left:949px;top:345px;width:1px;height:11px;background:#555;"></div><div style="position:absolute;left:995px;top:345px;width:1px;height:11px;background:#555;"></div><div style="position:absolute;left:838px;top:367px;width:186px;height:163px;background:#262626;"></div><div style="position:absolute;left:838px;top:367px;width:186px;height:16px;background:#343434;border-top:1px solid #5a9bc4;"></div><span class="t" style="left:900.50px;top:371.70px;font-size:9px;color:#ddd;transform:scaleX(0.8500);">Brush Size</span><svg style="position:absolute;left:1000.7px;top:371.2px;" width="8" height="7.5" viewBox="0 0 8 7.5"><path d="M4 1.5H0.5V7H6V3.5" fill="none" stroke="#ccc" stroke-width="1"/><path d="M5.2 0.5H7.2V2.5M7.200 0.5L4.800 2.900" fill="none" stroke="#ddd" stroke-width="1"/></svg><svg style="position:absolute;left:1013.5px;top:371.4px;" width="6.5" height="6.5" viewBox="0 0 6.5 6.5"><path d="M0.700 0.700L5.800 5.800M5.800 0.700L0.700 5.800" stroke="#e4e4e4" stroke-width="1.900"/></svg><div style="position:absolute;left:838px;top:384px;width:170px;height:146px;background:#3c3c3c;"></div><div style="position:absolute;left:838px;top:384px;width:29px;height:36px;background:#555;"></div><svg style="position:absolute;left:852.15px;top:397.65px;" width="0.7" height="0.7" viewBox="0 0 0.7 0.7"><circle cx="0.35" cy="0.35" r="0.35" fill="#f0f0f0"/></svg><span class="t" style="left:850.47px;top:412.35px;font-size:7.3px;color:#f4f4f4;">1</span><div style="position:absolute;left:868px;top:384px;width:29px;height:36px;background:#555;"></div><svg style="position:absolute;left:881.95px;top:397.45px;" width="1.1" height="1.1" viewBox="0 0 1.1 1.1"><circle cx="0.55" cy="0.55" r="0.55" fill="#f0f0f0"/></svg><span class="t" style="left:877.42px;top:412.35px;font-size:7.3px;color:#f4f4f4;">1.5</span><div style="position:absolute;left:898px;top:384px;width:29px;height:36px;background:#555;"></div><svg style="position:absolute;left:911.7px;top:397.2px;" width="1.6" height="1.6" viewBox="0 0 1.6 1.6"><circle cx="0.8" cy="0.8" r="0.8" fill="#f0f0f0"/></svg><span class="t" style="left:910.47px;top:412.35px;font-size:7.3px;color:#f4f4f4;">2</span><div style="position:absolute;left:928px;top:384px;width:29px;height:36px;background:#555;"></div><svg style="position:absolute;left:941.3px;top:396.8px;" width="2.4" height="2.4" viewBox="0 0 2.4 2.4"><circle cx="1.2" cy="1.2" r="1.2" fill="#f0f0f0"/></svg><span class="t" style="left:940.47px;top:412.35px;font-size:7.3px;color:#f4f4f4;">3</span><div style="position:absolute;left:958px;top:384px;width:29px;height:36px;background:#555;"></div><svg style="position:absolute;left:970.9px;top:396.4px;" width="3.2" height="3.2" viewBox="0 0 3.2 3.2"><circle cx="1.6" cy="1.6" r="1.6" fill="#f0f0f0"/></svg><span class="t" style="left:970.47px;top:412.35px;font-size:7.3px;color:#f4f4f4;">4</span><div style="position:absolute;left:838px;top:421px;width:29px;height:36px;background:#555;"></div><svg style="position:absolute;left:850.55px;top:433.75px;" width="3.9" height="3.9" viewBox="0 0 3.9 3.9"><circle cx="1.95" cy="1.95" r="1.95" fill="#f0f0f0"/></svg><span class="t" style="left:850.47px;top:449.35px;font-size:7.3px;color:#f4f4f4;">5</span><div style="position:absolute;left:868px;top:421px;width:29px;height:36px;background:#555;"></div><svg style="position:absolute;left:879.8px;top:433.0px;" width="5.4" height="5.4" viewBox="0 0 5.4 5.4"><circle cx="2.7" cy="2.7" r="2.7" fill="#f0f0f0"/></svg><span class="t" style="left:880.47px;top:449.35px;font-size:7.3px;color:#f4f4f4;">7</span><div style="position:absolute;left:898px;top:421px;width:29px;height:36px;background:#555;"></div><svg style="position:absolute;left:908.7px;top:431.9px;" width="7.6" height="7.6" viewBox="0 0 7.6 7.6"><circle cx="3.8" cy="3.8" r="3.8" fill="#f0f0f0"/></svg><span class="t" style="left:908.44px;top:449.35px;font-size:7.3px;color:#f4f4f4;">10</span><div style="position:absolute;left:928px;top:421px;width:29px;height:36px;background:#555;"></div><svg style="position:absolute;left:937.9px;top:431.09999999999997px;" width="9.2" height="9.2" viewBox="0 0 9.2 9.2"><circle cx="4.6" cy="4.6" r="4.6" fill="#f0f0f0"/></svg><span class="t" style="left:938.44px;top:449.35px;font-size:7.3px;color:#f4f4f4;">12</span><div style="position:absolute;left:958px;top:421px;width:29px;height:36px;background:#555;"></div><svg style="position:absolute;left:966.85px;top:430.05px;" width="11.3" height="11.3" viewBox="0 0 11.3 11.3"><circle cx="5.65" cy="5.65" r="5.65" fill="#f0f0f0"/></svg><span class="t" style="left:968.44px;top:449.35px;font-size:7.3px;color:#f4f4f4;">15</span><div style="position:absolute;left:838px;top:458px;width:29px;height:36px;background:#555;"></div><svg style="position:absolute;left:845.0px;top:466.2px;" width="15" height="15" viewBox="0 0 15 15"><circle cx="7.5" cy="7.5" r="7.5" fill="#f0f0f0"/></svg><span class="t" style="left:848.44px;top:486.35px;font-size:7.3px;color:#f4f4f4;">20</span><div style="position:absolute;left:868px;top:458px;width:29px;height:36px;background:#555;"></div><svg style="position:absolute;left:873.5px;top:464.7px;" width="18" height="18" viewBox="0 0 18 18"><circle cx="9.0" cy="9.0" r="9.0" fill="#f0f0f0"/></svg><span class="t" style="left:878.44px;top:486.35px;font-size:7.3px;color:#f4f4f4;">25</span><div style="position:absolute;left:898px;top:458px;width:29px;height:36px;background:#555;"></div><svg style="position:absolute;left:903.5px;top:464.7px;" width="18" height="18" viewBox="0 0 18 18"><circle cx="9.0" cy="9.0" r="9.0" fill="#f0f0f0"/></svg><span class="t" style="left:908.44px;top:486.35px;font-size:7.3px;color:#f4f4f4;">30</span><div style="position:absolute;left:928px;top:458px;width:29px;height:36px;background:#555;"></div><svg style="position:absolute;left:933.5px;top:464.7px;" width="18" height="18" viewBox="0 0 18 18"><circle cx="9.0" cy="9.0" r="9.0" fill="#f0f0f0"/></svg><span class="t" style="left:938.44px;top:486.35px;font-size:7.3px;color:#f4f4f4;">40</span><div style="position:absolute;left:958px;top:458px;width:29px;height:36px;background:#555;"></div><svg style="position:absolute;left:963.5px;top:464.7px;" width="18" height="18" viewBox="0 0 18 18"><circle cx="9.0" cy="9.0" r="9.0" fill="#f0f0f0"/></svg><span class="t" style="left:968.44px;top:486.35px;font-size:7.3px;color:#f4f4f4;">50</span><div style="position:absolute;left:838px;top:495px;width:29px;height:35px;background:#555;"></div><svg style="position:absolute;left:843.5px;top:501.2px;" width="18" height="18" viewBox="0 0 18 18"><circle cx="9.0" cy="9.0" r="9.0" fill="#f0f0f0"/></svg><span class="t" style="left:848.44px;top:523.35px;font-size:7.3px;color:#f4f4f4;">70</span><div style="position:absolute;left:868px;top:495px;width:29px;height:35px;background:#555;"></div><svg style="position:absolute;left:873.5px;top:501.2px;" width="18" height="18" viewBox="0 0 18 18"><circle cx="9.0" cy="9.0" r="9.0" fill="#f0f0f0"/></svg><span class="t" style="left:876.41px;top:523.35px;font-size:7.3px;color:#f4f4f4;">100</span><div style="position:absolute;left:898px;top:495px;width:29px;height:35px;background:#555;"></div><svg style="position:absolute;left:903.5px;top:501.2px;" width="18" height="18" viewBox="0 0 18 18"><circle cx="9.0" cy="9.0" r="9.0" fill="#f0f0f0"/></svg><span class="t" style="left:906.41px;top:523.35px;font-size:7.3px;color:#f4f4f4;">150</span><div style="position:absolute;left:928px;top:495px;width:29px;height:35px;background:#555;"></div><svg style="position:absolute;left:933.5px;top:501.2px;" width="18" height="18" viewBox="0 0 18 18"><circle cx="9.0" cy="9.0" r="9.0" fill="#f0f0f0"/></svg><span class="t" style="left:936.41px;top:523.35px;font-size:7.3px;color:#f4f4f4;">200</span><div style="position:absolute;left:958px;top:495px;width:29px;height:35px;background:#555;"></div><svg style="position:absolute;left:963.5px;top:501.2px;" width="18" height="18" viewBox="0 0 18 18"><circle cx="9.0" cy="9.0" r="9.0" fill="#f0f0f0"/></svg><span class="t" style="left:966.41px;top:523.35px;font-size:7.3px;color:#f4f4f4;">300</span><div style="position:absolute;left:1008px;top:384px;width:14px;height:146px;background:#2e2e2e;"></div><svg style="position:absolute;left:1011.5px;top:386px;" width="7" height="6" viewBox="0 0 7 6"><path d="M3.5 0.5L6.5 5.5H0.5Z" fill="#999"/></svg><div style="position:absolute;left:1008.5px;top:393px;width:13px;height:120px;background:linear-gradient(to right,#6a6a6a,#555);border-radius:3px;"></div><svg style="position:absolute;left:1011.5px;top:522px;" width="7" height="6" viewBox="0 0 7 6"><path d="M3.5 5.5L6.5 0.5H0.5Z" fill="#999"/></svg><div style="position:absolute;left:0px;top:530px;width:1024px;height:16px;background:#222;"></div><span class="t" style="left:4.80px;top:535.00px;font-size:9px;color:#ddd;transform:scaleX(0.9216);">500 * 1000 pixel</span><span class="t" style="left:71.50px;top:535.00px;font-size:9px;color:#ddd;transform:scaleX(0.9567);">(3.6 * 7.3cm)</span><span class="t" style="left:128.00px;top:535.00px;font-size:9px;color:#ddd;transform:scaleX(0.9380);">350 dpi</span><span class="t" style="left:163.70px;top:535.00px;font-size:9px;color:#ddd;transform:scaleX(0.8852);">100 %</span><span class="t" style="left:193.40px;top:535.00px;font-size:9px;color:#ddd;transform:scaleX(0.8907);">( 453, 357 )</span><span class="t" style="left:240.30px;top:535.00px;font-size:9px;color:#ddd;">Vẽ một đường thẳng bằng cách giữ phím Shift, Thay đổi cỡ cọ bằng cách giữ phím Ctrl, Alt và kéo</span><div style="position:absolute;left:0;top:546px;width:1024px;height:30px;background:#6d6b3a;overflow:hidden"><div style="position:absolute;left:-60px;top:-20px;width:200px;height:70px;background:radial-gradient(ellipse at center,#5e5f36 0%,rgba(94,95,54,0) 70%)"></div><div style="position:absolute;left:60px;top:-25px;width:230px;height:80px;background:radial-gradient(ellipse at center,rgba(136,106,68,.85) 0%,rgba(136,106,68,.6) 40%,rgba(136,106,68,0) 70%)"></div><div style="position:absolute;left:205px;top:-5px;width:70px;height:45px;background:radial-gradient(ellipse at center,rgba(196,162,128,.9) 0%,rgba(196,162,128,0) 70%)"></div><div style="position:absolute;left:500px;top:-30px;width:230px;height:100px;background:radial-gradient(ellipse at center,rgba(150,118,86,.9) 0%,rgba(150,118,86,.6) 40%,rgba(150,118,86,0) 70%)"></div><div style="position:absolute;left:612px;top:2px;width:80px;height:36px;background:radial-gradient(ellipse at center,#cbb08a 0%,rgba(203,176,138,0) 70%)"></div><div style="position:absolute;left:760px;top:-10px;width:264px;height:60px;background:radial-gradient(ellipse at center,#76733e 0%,rgba(118,115,62,0) 70%)"></div><div style="position:absolute;left:795px;top:-4px;width:24px;height:16px;background:radial-gradient(ellipse at center,rgba(190,200,120,.8) 0%,rgba(190,200,120,0) 70%)"></div></div><div style="position:absolute;left:318px;top:547px;width:43px;height:29px;background:rgba(255,255,255,.2);border:1px solid rgba(255,255,255,.3);border-bottom:none;"></div><div style="position:absolute;left:364.2px;top:547px;width:43.8px;height:29px;background:linear-gradient(to right,rgba(200,225,222,.8),rgba(150,205,215,.75));border:1px solid rgba(235,250,245,.8);border-bottom:none;"></div><svg style="position:absolute;left:9px;top:551px;" width="20" height="20" viewBox="0 0 20 20"><path d="M0 3L8.500 1.800V9.500H0ZM9.500 1.600L20 0V9.500H9.500ZM0 10.500H8.500V18.200L0 17ZM9.500 10.500H20V20L9.500 18.400Z" fill="#fff"/></svg><svg style="position:absolute;left:50px;top:551px;" width="22" height="21" viewBox="0 0 22 21"><path d="M11 12L1 16L11 20.500L21 16Z" fill="#3b6fd0"/><path d="M11 9.500L1 13.500L11 18L21 13.500Z" fill="#d8322e"/><path d="M11 7L1 11L11 15.500L21 11Z" fill="#f2c521"/><path d="M11 1L1 6.500V9L11 13.500L21 9V6.500Z" fill="#7ab92e"/><path d="M11 1L1 6.500L11 11L21 6.500Z" fill="#93cc3a"/></svg><svg style="position:absolute;left:96px;top:549px;" width="24" height="25" viewBox="0 0 24 25"><ellipse cx="12" cy="12" rx="12" ry="5" transform="rotate(-35 12 12)" fill="none" stroke="#f0b820" stroke-width="1.800"/><path d="M12 4.500A8.200 8.200 0 1 0 19.800 15.500H15.500A4 4 0 0 1 8 14H20.200A8.200 8.200 0 0 0 12 4.500ZM8 11A4 4 0 0 1 16 11Z" fill="#2fa3e6"/></svg><svg style="position:absolute;left:141px;top:551px;" width="22" height="22" viewBox="0 0 22 22"><circle cx="11" cy="11" r="10.500" fill="#e33b2e"/><path d="M11 11L1.900 5.800A10.500 10.500 0 0 0 10 21.450L14.500 13Z" fill="#2da94f"/><path d="M11 11L14.800 13.500L10 21.450A10.500 10.500 0 0 0 20.800 7.200H11Z" fill="#fbc116"/><circle cx="11" cy="11" r="4.800" fill="#f4f4f4"/><circle cx="11" cy="11" r="3.800" fill="#4285f4"/></svg><svg style="position:absolute;left:188px;top:551px;" width="24" height="22" viewBox="0 0 24 22"><path d="M1 3H9L10.500 5H23V20H1Z" fill="#e9c766"/><rect x="1.500" y="6.500" width="21" height="5" fill="#f6e6a0"/><rect x="3" y="11" width="18" height="9.500" fill="#78b6e6"/><rect x="5" y="13.500" width="14" height="4" fill="#b9dcf5"/><rect x="5" y="17.500" width="3" height="3.500" fill="#f2f2f2"/><rect x="16" y="17.500" width="3" height="3.500" fill="#f2f2f2"/></svg><svg style="position:absolute;left:234px;top:549px;" width="26" height="26" viewBox="0 0 26 26"><rect x="3" y="2" width="20" height="20" rx="2" fill="#f4ded4" opacity=".9"/><rect x="4.500" y="6" width="20" height="15" rx="1.500" fill="#e2572b"/><rect x="6.500" y="8" width="16" height="11" fill="#f9e3d6"/><circle cx="17.500" cy="13.500" r="3.500" fill="#e2572b"/><path d="M8 11H12.500M8 13.500H12.500M8 16H12.500" stroke="#e2572b" stroke-width="1.300"/></svg><svg style="position:absolute;left:281px;top:551px;" width="24" height="24" viewBox="0 0 24 24"><rect x="1" y="1" width="9" height="9" fill="#e4e0dc"/><rect x="12" y="1" width="9" height="9" fill="#e4e0dc"/><rect x="6.500" y="10.500" width="9" height="9" fill="#e4e0dc"/></svg><span class="t" style="left:284.00px;top:551.50px;font-size:9px;color:#c8282a;font-weight:bold;transform:scaleX(0.9091);">u</span><span class="t" style="left:296.25px;top:551.50px;font-size:9px;color:#c8282a;font-weight:bold;transform:scaleX(0.9938);">i</span><span class="t" style="left:289.50px;top:561.00px;font-size:9px;color:#c8282a;font-weight:bold;transform:scaleX(0.9091);">n</span><svg style="position:absolute;left:329px;top:550px;" width="22" height="22" viewBox="0 0 22 22"><circle cx="10.500" cy="10.800" r="10" fill="#f0f6e4"/><circle cx="10.500" cy="10.800" r="9" fill="#5fb84c"/><path d="M10.500 10.800L12.500 0L21 5.500Z" fill="#f4f4ec"/><circle cx="10.500" cy="10.800" r="4" fill="none" stroke="#f2f6ea" stroke-width="1.700"/><path d="M10.500 10.800L13 1L20.500 6.500Z" fill="#f4f4ec"/><circle cx="10.500" cy="10.800" r="2.600" fill="#5fb84c"/><path d="M13.300 6.500L14.300 2.500M15.300 8.800L19 6.500M14.500 7.500L17 4.200" stroke="#dc4630" stroke-width="1.300"/></svg><svg style="position:absolute;left:374px;top:549.5px;" width="24" height="22" viewBox="0 0 24 22"><rect x="0" y="0" width="24" height="22" rx="4" fill="#f7f7f4"/><path d="M13 3.500C17.500 7 19 10 19 12.500A6.500 6.500 0 0 1 6 12.500C6 10 8 6.500 13 3.500Z" fill="#1f9ad0"/><path d="M6 12.500A6.500 6.500 0 0 0 14 18.800C12 15 10 13 6.200 11Z" fill="#2fa84e"/><path d="M13 3.500C9.500 5.500 6.800 8.500 6.100 11.500C8 10 10 9.500 12.500 10C12 7.500 12.300 5.500 13 3.500Z" fill="#e8402c"/><path d="M13 3.500C12.300 5.500 12 7.500 12.500 10C13.500 8 14.500 6.500 13 3.500Z" fill="#f5a020"/><path d="M12.500 10C15 10.500 17 12 17.500 14.500" stroke="#22b4c0" stroke-width="2" fill="none" opacity=".7"/></svg><svg style="position:absolute;left:833px;top:555px;" width="11.5" height="11.5" viewBox="0 0 11.5 11.5"><rect width="12" height="12" rx="1" fill="#d61f26"/><path d="M2.500 9.500C5 8 6.500 5 6 2.500C7 5.500 8.500 7.500 10 8C7.500 8 4.500 8.500 2.500 9.500Z" fill="none" stroke="#fff" stroke-width=".900"/></svg><svg style="position:absolute;left:851px;top:555.5px;" width="11.5" height="11.5" viewBox="0 0 11.5 11.5"><rect width="11" height="11" fill="#f3dede" stroke="#d8c0c0" stroke-width=".500"/></svg><span class="t" style="left:853.20px;top:556.50px;font-size:10px;color:#cc2030;font-weight:bold;transform:scaleX(1.0492);">V</span><svg style="position:absolute;left:868.5px;top:556px;" width="11" height="11" viewBox="0 0 11 11"><path d="M1 4H3.500L6.500 1V10L3.500 7H1Z" fill="#f2f2f2"/><path d="M8 3.500Q9.500 5.500 8 7.500M9.500 2Q12 5.500 9.500 9" fill="none" stroke="#f2f2f2" stroke-width=".900"/></svg><svg style="position:absolute;left:886.5px;top:556px;" width="13" height="11" viewBox="0 0 13 11"><path d="M1 4H3.500L6.500 1V10L3.500 7H1Z" fill="#e0503a"/><path d="M8 3.500Q9.500 5.500 8 7.500M9.500 2Q12 5.500 9.500 9" fill="none" stroke="#d8d0c8" stroke-width=".900"/></svg><svg style="position:absolute;left:905px;top:556.5px;" width="12" height="10" viewBox="0 0 12 10"><g fill="#f0f0f0"><rect x="0" y="8" width="1.500" height="2"/><rect x="2.500" y="6.500" width="1.500" height="3.500"/><rect x="5" y="4.500" width="1.500" height="5.500"/><rect x="7.500" y="2.500" width="1.500" height="7.500"/><rect x="10" y="0" width="1.500" height="10"/></g></svg><svg style="position:absolute;left:923px;top:554.5px;" width="13" height="14" viewBox="0 0 13 14"><path d="M2 1V4M5 1V4M1 4H6V6.500L4.500 8V13H2.500V8L1 6.500Z" fill="#f0f0f0" stroke="#f0f0f0" stroke-width=".800"/><rect x="6" y="2.500" width="6" height="10.500" fill="none" stroke="#f0f0f0" stroke-width="1"/><rect x="7.500" y="0.800" width="3" height="1.700" fill="#f0f0f0"/><rect x="7" y="8" width="4" height="4.500" fill="#d8302a"/></svg><span class="t" style="left:948.50px;top:557.25px;font-size:9.5px;color:#fff;transform:scaleX(0.8163);">VIE</span><span class="t" style="left:982.25px;top:550.75px;font-size:9.5px;color:#fff;transform:scaleX(0.9041);">09:39</span><span class="t" style="left:975.05px;top:563.55px;font-size:9.5px;color:#fff;transform:scaleX(0.9328);">01/07/21</span><svg style="position:absolute;left:9.0px;top:36px;" width="17" height="17" viewBox="0 0 17 17"><path d="M3.5 12.5a2.6 2.6 0 0 1 .3-5.1a3.6 3.6 0 0 1 6.8-1.2a3.2 3.2 0 0 1 2.6 6.3Z" fill="#7ab8f0"/><path d="M6 9.2L7.8 11L11.2 7.2" fill="none" stroke="#fff" stroke-width="1.5"/></svg><svg style="position:absolute;left:29.25px;top:36px;" width="17" height="17" viewBox="0 0 17 17"><path d="M6 7.5H4.5V14H12.5V7.5H11" fill="none" stroke="#f2f2f2" stroke-width="1.3"/><path d="M8.5 11V3.5M5.8 6L8.5 3.2L11.2 6" fill="none" stroke="#f2f2f2" stroke-width="1.4"/></svg><svg style="position:absolute;left:49.5px;top:36px;" width="17" height="17" viewBox="0 0 17 17"><ellipse cx="8.5" cy="8" rx="5.8" ry="4.2" fill="#f2f2f2"/><path d="M6 11L6.5 14L10 11Z" fill="#f2f2f2"/><g fill="#bbb"><circle cx="6" cy="8" r=".8"/><circle cx="8.5" cy="8" r=".8"/><circle cx="11" cy="8" r=".8"/></g></svg><svg style="position:absolute;left:69.75px;top:36px;" width="17" height="17" viewBox="0 0 17 17"><rect x="2.8" y="3.8" width="11.5" height="8.2" rx="1" fill="#f2f2f2"/><path d="M7 12L8.5 14L10 12Z" fill="#f2f2f2"/><path d="M4.5 6.5H12.5M4.5 9H10" stroke="#555" stroke-width="1.2"/></svg><svg style="position:absolute;left:90.0px;top:36px;" width="17" height="17" viewBox="0 0 17 17"><path d="M4.5 3.5H10L12.5 6V14H4.5Z" fill="none" stroke="#f2f2f2" stroke-width="1.2"/><path d="M6 7.5H11M6 9.7H11M6 11.9H11" stroke="#f2f2f2" stroke-width="1.1"/></svg><svg style="position:absolute;left:110.25px;top:36px;" width="17" height="17" viewBox="0 0 17 17"><rect x="3.5" y="3.5" width="11" height="9" fill="none" stroke="#f2f2f2" stroke-width="1.1"/><path d="M3.5 6.5H14.5M3.5 9.5H14.5M6.5 3.5V9.5" stroke="#f2f2f2" stroke-width="1"/><circle cx="6" cy="12" r="2.6" fill="#4a4a4a" stroke="#f2f2f2" stroke-width="1"/><path d="M6 10.6V12H7.2" fill="none" stroke="#f2f2f2" stroke-width=".8"/></svg><svg style="position:absolute;left:130.5px;top:36px;" width="17" height="17" viewBox="0 0 17 17"><g fill="#f2f2f2"><rect x="3" y="5" width="3.2" height="2.6"/><rect x="7" y="5" width="3.2" height="2.6"/><rect x="3" y="8.4" width="3.2" height="2.6"/><rect x="7" y="8.4" width="3.2" height="2.6"/><rect x="11" y="8.4" width="3" height="2.6"/><rect x="3" y="11.8" width="3.2" height="2.6"/><rect x="7" y="11.8" width="3.2" height="2.6"/><rect x="11" y="11.8" width="3" height="2.6"/></g><path d="M10.5 8L14 3.5" stroke="#ddd" stroke-width="1.6"/></svg><svg style="position:absolute;left:170px;top:36px;" width="23" height="17" viewBox="0 0 23 17"><path d="M5 8L10 3.8V6.3C14.5 6.3 17.3 9 17.8 12.8C16 10.3 13.5 9.6 10 9.8V12.3Z" fill="#f2f2f2"/></svg><svg style="position:absolute;left:197px;top:36px;" width="23" height="17" viewBox="0 0 23 17"><path d="M18 8L13 3.8V6.3C8.5 6.3 5.7 9 5.2 12.8C7 10.3 9.5 9.6 13 9.8V12.3Z" fill="#f2f2f2"/></svg><svg style="position:absolute;left:232.0px;top:36px;" width="17" height="17" viewBox="0 0 17 17"><circle cx="8.5" cy="8.5" r="5.6" fill="none" stroke="#a9d4f7" stroke-width="1.2"/><path d="M4.6 4.6L12.4 12.4" stroke="#a9d4f7" stroke-width="1.2"/></svg><svg style="position:absolute;left:252.2px;top:36px;" width="17" height="17" viewBox="0 0 17 17"><g stroke="#c8c8c8" stroke-width=".9"><path d="M3 5.5L14 3.5M3 7.3L14 5.8M3 9.1L14 8.1M3 10.9L14 10.4M3 12.7L14 12.7M3 14.2L14 14.6"/></g></svg><svg style="position:absolute;left:272.4px;top:36px;" width="17" height="17" viewBox="0 0 17 17"><rect x="3.5" y="3.5" width="10" height="10" fill="#8a8a8a"/><g stroke="#d8d8d8" stroke-width=".9"><path d="M3.5 3.5H13.5M3.5 6H13.5M3.5 8.5H13.5M3.5 11H13.5M3.5 13.5H13.5M3.5 3.5V13.5M6 3.5V13.5M8.500 3.5V13.5M11 3.5V13.5M13.5 3.5V13.5"/></g></svg><svg style="position:absolute;left:292.6px;top:36px;" width="17" height="17" viewBox="0 0 17 17"><g stroke="#d0d0d0" stroke-width="1"><path d="M4 8.5L13.5 3.5M4 8.5L13.5 6M4 8.5L13.5 8.5M4 8.5L13.5 11M4 8.5L13.5 13.5"/></g><path d="M4 8.5L9 6.5V10.5Z" fill="#e8e8e8"/></svg><svg style="position:absolute;left:312.8px;top:36px;" width="17" height="17" viewBox="0 0 17 17"><g stroke="#e4e4e4" stroke-width="1.4"><path d="M8.5 2.5V14.5M2.5 8.5H14.5M4.2 4.2L12.8 12.800M12.8 4.2L4.2 12.8"/></g><circle cx="8.5" cy="8.5" r="1.4" fill="#4a4a4a"/></svg><svg style="position:absolute;left:333.0px;top:36px;" width="17" height="17" viewBox="0 0 17 17"><g fill="none" stroke="#d8d8d8" stroke-width="1"><circle cx="8.5" cy="8.5" r="5.6"/><circle cx="8.5" cy="8.5" r="3.6"/><circle cx="8.5" cy="8.5" r="1.6"/></g></svg><svg style="position:absolute;left:353.2px;top:36px;" width="17" height="17" viewBox="0 0 17 17"><path d="M4 4.5H8.5Q11 4.5 10 7L8 9.5Q6 12.5 9 12.5H13" fill="none" stroke="#e0e0e0" stroke-width="1.3"/><circle cx="4" cy="4.5" r="1.4" fill="#fff"/><circle cx="13" cy="12.5" r="1.4" fill="#fff"/></svg><svg style="position:absolute;left:373.4px;top:36px;" width="17" height="17" viewBox="0 0 17 17"><circle cx="8.5" cy="8.5" r="5" fill="none" stroke="#e8e8e8" stroke-width="1.6"/><g fill="#fff"><circle cx="8.5" cy="3.5" r="1.1"/><circle cx="8.5" cy="13.5" r="1.1"/><circle cx="3.5" cy="8.5" r="1.1"/><circle cx="13.5" cy="8.5" r="1.1"/><circle cx="5" cy="5" r="1"/><circle cx="12" cy="5" r="1"/><circle cx="5" cy="12" r="1"/><circle cx="12" cy="12" r="1"/></g></svg><svg style="position:absolute;left:393.6px;top:36px;" width="17" height="17" viewBox="0 0 17 17"><circle cx="8.5" cy="8.5" r="5.2" fill="none" stroke="#d8d8d8" stroke-width="1.1" stroke-dasharray="2.2 1.2"/><circle cx="8.5" cy="8.5" r="4.4" fill="none" stroke="#d8d8d8" stroke-width="1"/><circle cx="8.5" cy="8.5" r="2.2" fill="none" stroke="#d8d8d8" stroke-width="1"/></svg><svg style="position:absolute;left:3px;top:65px;" width="21" height="21" viewBox="0 0 21 21"><path d="M16.5 4.2L9.5 11.8" stroke="#fff" stroke-width="2.2" stroke-linecap="round"/><path d="M9.8 11.2C8 10.8 6.5 12 6 13.2C5.5 14.3 4.5 14.6 3.8 14.6C5.5 16 8.5 16 9.8 14.6C10.8 13.6 10.8 12.2 9.800 11.2Z" fill="#fff"/></svg><svg style="position:absolute;left:3px;top:88.5px;" width="21" height="21" viewBox="0 0 21 21"><g transform="rotate(-38 10.5 10.5)"><rect x="4.5" y="6.5" width="12" height="8" rx="1.3" fill="none" stroke="#fff" stroke-width="1.5"/><rect x="4.5" y="6.5" width="5" height="8" rx="1" fill="#fff"/></g></svg><svg style="position:absolute;left:3px;top:112px;" width="21" height="21" viewBox="0 0 21 21"><rect x="5.5" y="5.5" width="10" height="10" fill="none" stroke="#d8d8d8" stroke-width="1.4"/></svg><svg style="position:absolute;left:3px;top:135.5px;" width="21" height="21" viewBox="0 0 21 21"><path d="M16.5 4.5L10.5 11" stroke="#fff" stroke-width="2.4" stroke-linecap="round"/><path d="M9.5 10.5L11.5 12.3L8.800 13.5Z" fill="#fff"/><g fill="#fff"><rect x="3.5" y="9.500" width="2.2" height="2.2"/><rect x="5.7" y="11.700" width="2.2" height="2.2"/><rect x="7.8" y="14" width="2.2" height="2.2"/></g></svg><svg style="position:absolute;left:3px;top:163.5px;" width="21" height="21" viewBox="0 0 21 21"><path d="M10.5 4.500V16.500M4.500 10.500H16.500" stroke="#fff" stroke-width="1.400"/><path d="M10.5 3L12.600 5.800H8.400ZM10.5 18L12.600 15.200H8.400ZM3 10.5L5.800 8.400V12.600ZM18 10.5L15.200 8.400V12.600Z" fill="#fff"/></svg><svg style="position:absolute;left:3px;top:191.5px;" width="21" height="21" viewBox="0 0 21 21"><rect x="5" y="5.500" width="10.5" height="10.5" fill="#ebebeb"/></svg><svg style="position:absolute;left:3px;top:215px;" width="21" height="21" viewBox="0 0 21 21"><path d="M2.200 10.800L8.300 5.600L13.900 10.400L7.800 16.400Z" fill="#fff"/><path d="M3.800 10.400L8.300 6.800L12.300 10.200Z" fill="#5a5a5a"/><path d="M6.300 7C5 4.500 5.500 2.500 7 2.300C8.300 2.200 8.800 3.800 8.800 5.800" fill="none" stroke="#fff" stroke-width="1.100"/><ellipse cx="15" cy="13.600" rx="1.300" ry="2.400" fill="#fff"/><path d="M13.500 10.500Q15 10.500 15.200 12" stroke="#fff" stroke-width="1" fill="none"/></svg><svg style="position:absolute;left:3px;top:238.5px;" width="21" height="21" viewBox="0 0 21 21"><defs><linearGradient id="tg" x1="0" y1="0" x2="1" y2="1"><stop offset="0" stop-color="#5a5a5a"/><stop offset="1" stop-color="#b8b8b8"/></linearGradient></defs><rect x="2.300" y="3.400" width="15.600" height="11.700" fill="url(#tg)" stroke="#e4e4e4" stroke-width="1"/></svg><svg style="position:absolute;left:3px;top:266.5px;" width="21" height="21" viewBox="0 0 21 21"><rect x="5.200" y="5.200" width="10.500" height="10.500" fill="none" stroke="#cacaca" stroke-width="1.300" stroke-dasharray="2 1.500"/></svg><svg style="position:absolute;left:3px;top:290px;" width="21" height="21" viewBox="0 0 21 21"><ellipse cx="10.5" cy="10.5" rx="6.800" ry="4.300" transform="rotate(-30 10.5 10.5)" fill="none" stroke="#c4c4c4" stroke-width="1.300" stroke-dasharray="1.800 1.500"/></svg><svg style="position:absolute;left:3px;top:313.5px;" width="21" height="21" viewBox="0 0 21 21"><path d="M5 16L12 9" stroke="#fff" stroke-width="2.400" stroke-linecap="round"/><path d="M13.500 3.500V6M16 5L14.500 6.500M17.500 8H15M16.500 11L14.800 9.500M11 4.500L12.300 6.300" stroke="#fff" stroke-width="1.100"/></svg><svg style="position:absolute;left:3px;top:337px;" width="21" height="21" viewBox="0 0 21 21"><path d="M13 4.800H5V16H15.500V9" fill="none" stroke="#d8d8d8" stroke-width="1.400" stroke-dasharray="2 1.600"/><path d="M17 3.500L10 11.500" stroke="#fff" stroke-width="2.200" stroke-linecap="round"/><path d="M9 10.800L11 12.500L8.300 13.500Z" fill="#fff"/></svg><svg style="position:absolute;left:3px;top:360.5px;" width="21" height="21" viewBox="0 0 21 21"><path d="M9 4.800H5V16H15.500V13" fill="none" stroke="#d8d8d8" stroke-width="1.400" stroke-dasharray="2 1.600"/><g transform="rotate(-40 12.500 9.500)"><rect x="7.500" y="6.500" width="10" height="6.500" rx="1" fill="#484848" stroke="#fff" stroke-width="1.300"/><rect x="7.500" y="6.500" width="4" height="6.500" fill="#fff"/></g></svg><span class="t" style="left:7.50px;top:389.00px;font-size:19px;color:#f4f4f4;font-weight:bold;transform:scaleX(0.9458);font-family:&quot;Liberation Serif&quot;,&quot;DejaVu Serif&quot;,serif;">T</span><svg style="position:absolute;left:3px;top:412px;" width="21" height="21" viewBox="0 0 21 21"><path d="M7.500 4L12 5L13.500 8.500L10 10.500L5.500 10L4.500 6.500Z" fill="none" stroke="#e8e8e8" stroke-width="1.200"/><path d="M10.500 9.500L17 12.800L14.300 13.500L13.500 16.500Z" fill="#fff"/></svg><svg style="position:absolute;left:3px;top:435.5px;" width="21" height="21" viewBox="0 0 21 21"><path d="M3.200 13.600L13.500 5.200Q16 3.400 17.300 5Q18.300 6.600 16 8.500L8 13.800Z" fill="#f4f4f4"/><path d="M4.800 13.200L8.800 10L8.300 12.600Z" fill="#484848"/></svg><svg style="position:absolute;left:3px;top:463.5px;" width="21" height="21" viewBox="0 0 21 21"><path d="M11.500 6.500L4.500 13.500L3.800 15.800L6 15L13 8" fill="none" stroke="#f4f4f4" stroke-width="1.400" stroke-linejoin="round"/><path d="M9.800 4.800L14.800 9.800" stroke="#f4f4f4" stroke-width="1.800" stroke-linecap="round"/><path d="M12.500 7L15 4.500" stroke="#f4f4f4" stroke-width="3" stroke-linecap="round"/></svg><svg style="position:absolute;left:3px;top:487px;" width="21" height="21" viewBox="0 0 21 21"><g stroke="#f4f4f4" stroke-linecap="round" fill="none"><path d="M7 10V5" stroke-width="1.700"/><path d="M9.300 9.500V3.500" stroke-width="1.700"/><path d="M11.600 9.500V4" stroke-width="1.700"/><path d="M13.800 10.500L14.300 5.800" stroke-width="1.600"/><path d="M6.500 12.500L3.800 9.800" stroke-width="1.800"/></g><path d="M6 9H14.800L14.300 13.500Q13.800 16.800 10.500 16.800Q7.500 16.800 6 13Z" fill="#f4f4f4"/></svg><svg style="position:absolute;left:31.3px;top:509.5px;" width="17" height="17" viewBox="0 0 17 17"><path d="M4.200 9.500a2.300 2.300 0 0 1 .3-4.500a3.200 3.200 0 0 1 6-1a2.800 2.800 0 0 1 2.300 5.500Z" fill="#f0f0f0"/><path d="M8.500 8V14M6 11.500L8.500 14.300L11 11.500" fill="none" stroke="#f0f0f0" stroke-width="1.700"/><path d="M8.500 6.500V10" stroke="#484848" stroke-width="2.600"/><path d="M8.500 6.500V13" stroke="#f0f0f0" stroke-width="1.700"/></svg><svg style="position:absolute;left:51px;top:509.5px;" width="17" height="17" viewBox="0 0 17 17"><path d="M4.500 3H10L12.500 5.500V14H4.500Z" fill="none" stroke="#e4e4e4" stroke-width="1.100"/><path d="M10 3V5.500H12.500" fill="none" stroke="#e4e4e4" stroke-width=".900"/></svg><svg style="position:absolute;left:71.4px;top:509.5px;" width="23" height="17" viewBox="0 0 23 17"><path d="M3.500 3H9L11.500 5.500V14H3.500Z" fill="none" stroke="#e4e4e4" stroke-width="1.100"/><path d="M9 3V5.500H11.500" fill="none" stroke="#e4e4e4" stroke-width=".900"/><rect x="5" y="7.500" width="2.500" height="2.500" fill="#e8e8e8"/><rect x="7.500" y="10" width="2.500" height="2.500" fill="#e8e8e8"/><path d="M15 7.500H20.500L17.750 10.500Z" fill="#f0f0f0"/></svg><svg style="position:absolute;left:97.2px;top:509.5px;" width="17" height="17" viewBox="0 0 17 17"><path d="M4.500 3H10L12.500 5.500V14H4.500Z" fill="none" stroke="#e4e4e4" stroke-width="1.100"/><path d="M10 3V5.500H12.500" fill="none" stroke="#e4e4e4" stroke-width=".900"/></svg><span class="t" style="left:103.20px;top:515.00px;font-size:8px;color:#e8e8e8;font-weight:bold;transform:scaleX(0.9357);">S</span><svg style="position:absolute;left:117px;top:509.5px;" width="17" height="17" viewBox="0 0 17 17"><path d="M3 4.500H7.500L8.800 6H14V13.500H3Z" fill="#ececec"/></svg><svg style="position:absolute;left:137.1px;top:509.5px;" width="17" height="17" viewBox="0 0 17 17"><rect x="6.500" y="3.500" width="7.500" height="7.500" fill="#777" stroke="#e0e0e0" stroke-width="1"/><rect x="3.500" y="6.500" width="7.500" height="7.500" fill="#484848" stroke="#e8e8e8" stroke-width="1.100"/></svg><svg style="position:absolute;left:163.1px;top:509.5px;" width="17" height="17" viewBox="0 0 17 17"><path d="M4 5.500H13M6.500 5.500V4H10.500V5.500" fill="none" stroke="#ececec" stroke-width="1.300"/><path d="M4.800 6.500H12.200V14H4.800Z" fill="none" stroke="#ececec" stroke-width="1.200"/><path d="M7 7.500V13M10 7.500V13" stroke="#ececec" stroke-width="1.300"/></svg><svg style="position:absolute;left:842px;top:342px;" width="17" height="17" viewBox="0 0 17 17"><path d="M4.500 3H10L12.500 5.500V14H4.500Z" fill="none" stroke="#e4e4e4" stroke-width="1.100"/><path d="M10 3V5.500H12.500" fill="none" stroke="#e4e4e4" stroke-width=".900"/></svg><svg style="position:absolute;left:862.2px;top:342px;" width="17" height="17" viewBox="0 0 17 17"><path d="M4.500 3H10L12.500 5.500V14H4.500Z" fill="none" stroke="#e4e4e4" stroke-width="1.100"/><path d="M10 3V5.500H12.500" fill="none" stroke="#e4e4e4" stroke-width=".900"/></svg><span class="t" style="left:868.70px;top:348.30px;font-size:7px;color:#e8e8e8;font-weight:bold;transform:scaleX(1.0240);">8</span><svg style="position:absolute;left:882.5px;top:342px;" width="17" height="17" viewBox="0 0 17 17"><path d="M4.500 3H10L12.500 5.500V14H4.500Z" fill="none" stroke="#e4e4e4" stroke-width="1.100"/><path d="M10 3V5.500H12.500" fill="none" stroke="#e4e4e4" stroke-width=".900"/></svg><span class="t" style="left:889.50px;top:348.30px;font-size:7px;color:#e8e8e8;font-weight:bold;transform:scaleX(0.7680);">1</span><svg style="position:absolute;left:903px;top:342px;" width="23" height="17" viewBox="0 0 23 17"><path d="M3 3H8.500L11 5.500V14H3Z" fill="none" stroke="#e4e4e4" stroke-width="1.100"/><path d="M8.500 3V5.500H11" fill="none" stroke="#e4e4e4" stroke-width=".900"/><path d="M7 11.500H12M9.500 9V14" stroke="#484848" stroke-width="3"/><path d="M7 11.500H12M9.500 9V14" stroke="#f0f0f0" stroke-width="1.400"/><path d="M14.500 7H20L17.250 10Z" fill="#f0f0f0"/></svg><svg style="position:absolute;left:928.3px;top:342px;" width="17" height="17" viewBox="0 0 17 17"><path d="M3 4.500H7.500L8.800 6H14V13.500H3Z" fill="#ececec"/></svg><svg style="position:absolute;left:953.3px;top:342px;" width="17" height="17" viewBox="0 0 17 17"><rect x="6.500" y="3.500" width="7.500" height="7.500" fill="#777" stroke="#e0e0e0" stroke-width="1"/><rect x="3.500" y="6.500" width="7.500" height="7.500" fill="#484848" stroke="#e8e8e8" stroke-width="1.100"/></svg><svg style="position:absolute;left:974px;top:342px;" width="17" height="17" viewBox="0 0 17 17"><rect x="3.500" y="3.500" width="3.500" height="3.500" fill="#ececec"/><rect x="3.500" y="10" width="3.500" height="3.500" fill="#ececec"/><rect x="10" y="6.500" width="4.500" height="4.500" fill="#ececec"/><path d="M7 5.250H8.500V11.750H7M8.500 8.500H10" fill="none" stroke="#ececec" stroke-width="1"/></svg><svg style="position:absolute;left:999.1px;top:342px;" width="17" height="17" viewBox="0 0 17 17"><path d="M4 5.500H13M6.500 5.500V4H10.500V5.500" fill="none" stroke="#ececec" stroke-width="1.300"/><path d="M4.800 6.500H12.200V14H4.800Z" fill="none" stroke="#ececec" stroke-width="1.200"/><path d="M7 7.500V13M10 7.500V13" stroke="#ececec" stroke-width="1.300"/></svg><svg style="position:absolute;left:34px;top:179px;" width="17" height="17" viewBox="0 0 17 17"><path d="M8.500 3A5.500 5.500 0 1 0 8.500 14C10 14 10 12.800 9.500 12.200C9 11.500 9.500 10.500 10.500 10.500H12A2 2 0 0 0 14 8.500A5.500 5.500 0 0 0 8.500 3Z" fill="#f0f0f0"/><g fill="#484848"><circle cx="6" cy="6.500" r="1"/><circle cx="9" cy="5.500" r="1"/><circle cx="11.500" cy="7.500" r="1"/><circle cx="5.500" cy="9.500" r="1"/></g></svg><svg style="position:absolute;left:54.5px;top:179.2px;" width="17" height="17" viewBox="0 0 17 17"><path d="M7.500 2.500A5 5 0 1 0 7.500 12.500C9 12.500 9 11.500 8.500 10.800C8 10 8.500 9.300 9.500 9.300H10.800A1.800 1.800 0 0 0 12.500 7.500A5 5 0 0 0 7.500 2.500Z" fill="#f0f0f0"/><g fill="#484848"><circle cx="5.200" cy="5.500" r=".9"/><circle cx="8" cy="4.700" r=".9"/><circle cx="10.200" cy="6.500" r=".9"/><circle cx="4.800" cy="8.300" r=".9"/></g><rect x="9" y="11" width="6.500" height="4" fill="#f0f0f0" stroke="#484848" stroke-width=".700"/></svg>
</body></html>
